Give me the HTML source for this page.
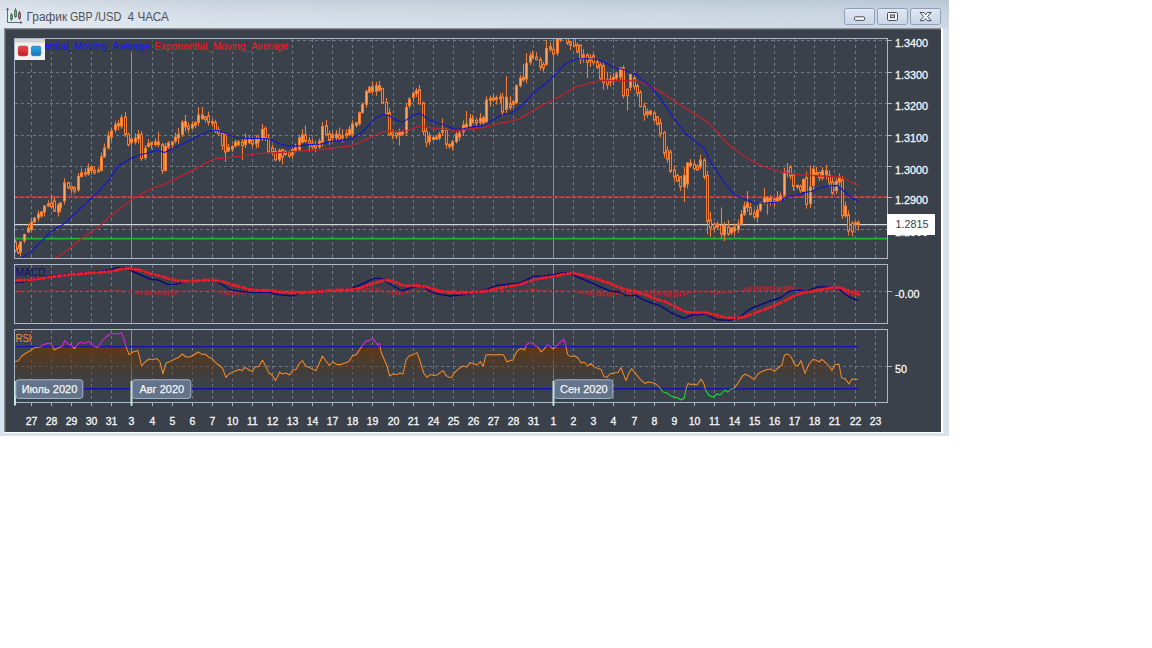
<!DOCTYPE html>
<html lang="ru"><head><meta charset="utf-8"><title>График GBP /USD 4 ЧАСА</title>
<style>
html,body{margin:0;padding:0;background:#fff;}
body{width:1152px;height:648px;position:relative;overflow:hidden;font-family:"Liberation Sans",sans-serif;}
#win{position:absolute;left:0;top:0;width:949px;height:436px;background:#d7e3ef;}
#win .tb{position:absolute;left:0;top:0;width:949px;height:29px;background:linear-gradient(90deg,rgba(255,255,255,0.3) 0%,rgba(255,255,255,0.05) 25%,rgba(110,140,170,0.1) 100%),linear-gradient(180deg,#c2ceda 0%,#d0dae5 40%,#d9e2ec 100%);}
#win .inner{position:absolute;left:4px;top:28px;width:939px;height:405px;background:#fff;}
#win .e1{position:absolute;left:4px;top:28px;width:937px;height:403.5px;background:#8b8f93;}
#win .e2{position:absolute;left:5px;top:29px;width:936px;height:402.5px;background:#555b63;}
#win .panel{position:absolute;left:6px;top:30px;width:935px;height:401.5px;background:#3a414b;}
.btn{position:absolute;top:8px;width:29px;height:14.5px;border:1px solid #8f9fb8;border-radius:2.5px;background:linear-gradient(#dfe8f3,#c9d6e6);box-sizing:content-box;}
</style></head><body>
<div id="win">
<div class="tb"></div><div class="inner"></div><div class="e1"></div><div class="e2"></div><div class="panel"></div>
<div class="btn" style="left:844px"></div><div class="btn" style="left:877px"></div><div class="btn" style="left:910px"></div>
</div>
<svg width="1152" height="648" viewBox="0 0 1152 648" style="position:absolute;left:0;top:0" font-family="'Liberation Sans', sans-serif">
<defs>
<linearGradient id="rg" gradientUnits="userSpaceOnUse" x1="0" y1="345" x2="0" y2="390"><stop offset="0" stop-color="#64370b" stop-opacity="0.95"/><stop offset="0.5" stop-color="#54371c" stop-opacity="0.5"/><stop offset="1" stop-color="#4a3a2c" stop-opacity="0"/></linearGradient>
<clipPath id="cm"><rect x="14.5" y="38.5" width="873.0" height="220.0"/></clipPath>
<clipPath id="cr"><rect x="14.5" y="346.6" width="873.0" height="60"/></clipPath>
<clipPath id="c70"><rect x="14.5" y="329.5" width="873.0" height="17.100000000000023"/></clipPath>
<clipPath id="cmid"><rect x="14.5" y="346.6" width="873.0" height="42.0"/></clipPath>
<clipPath id="c30"><rect x="14.5" y="388.6" width="873.0" height="13.899999999999977"/></clipPath>
</defs>
<g shape-rendering="crispEdges">
<line x1="31.5" y1="38.5" x2="31.5" y2="258.5" stroke="#6e7985" stroke-width="1" stroke-dasharray="3 3"/>
<line x1="51.5" y1="38.5" x2="51.5" y2="258.5" stroke="#6e7985" stroke-width="1" stroke-dasharray="3 3"/>
<line x1="71.5" y1="38.5" x2="71.5" y2="258.5" stroke="#6e7985" stroke-width="1" stroke-dasharray="3 3"/>
<line x1="91.5" y1="38.5" x2="91.5" y2="258.5" stroke="#6e7985" stroke-width="1" stroke-dasharray="3 3"/>
<line x1="111.5" y1="38.5" x2="111.5" y2="258.5" stroke="#6e7985" stroke-width="1" stroke-dasharray="3 3"/>
<line x1="131.5" y1="38.5" x2="131.5" y2="258.5" stroke="#8093a6" stroke-width="1"/>
<line x1="152.5" y1="38.5" x2="152.5" y2="258.5" stroke="#6e7985" stroke-width="1" stroke-dasharray="3 3"/>
<line x1="172.5" y1="38.5" x2="172.5" y2="258.5" stroke="#6e7985" stroke-width="1" stroke-dasharray="3 3"/>
<line x1="192.5" y1="38.5" x2="192.5" y2="258.5" stroke="#6e7985" stroke-width="1" stroke-dasharray="3 3"/>
<line x1="212.5" y1="38.5" x2="212.5" y2="258.5" stroke="#6e7985" stroke-width="1" stroke-dasharray="3 3"/>
<line x1="232.5" y1="38.5" x2="232.5" y2="258.5" stroke="#6e7985" stroke-width="1" stroke-dasharray="3 3"/>
<line x1="252.5" y1="38.5" x2="252.5" y2="258.5" stroke="#6e7985" stroke-width="1" stroke-dasharray="3 3"/>
<line x1="272.5" y1="38.5" x2="272.5" y2="258.5" stroke="#6e7985" stroke-width="1" stroke-dasharray="3 3"/>
<line x1="292.5" y1="38.5" x2="292.5" y2="258.5" stroke="#6e7985" stroke-width="1" stroke-dasharray="3 3"/>
<line x1="312.5" y1="38.5" x2="312.5" y2="258.5" stroke="#6e7985" stroke-width="1" stroke-dasharray="3 3"/>
<line x1="332.5" y1="38.5" x2="332.5" y2="258.5" stroke="#6e7985" stroke-width="1" stroke-dasharray="3 3"/>
<line x1="352.5" y1="38.5" x2="352.5" y2="258.5" stroke="#6e7985" stroke-width="1" stroke-dasharray="3 3"/>
<line x1="372.5" y1="38.5" x2="372.5" y2="258.5" stroke="#6e7985" stroke-width="1" stroke-dasharray="3 3"/>
<line x1="393.5" y1="38.5" x2="393.5" y2="258.5" stroke="#6e7985" stroke-width="1" stroke-dasharray="3 3"/>
<line x1="413.5" y1="38.5" x2="413.5" y2="258.5" stroke="#6e7985" stroke-width="1" stroke-dasharray="3 3"/>
<line x1="433.5" y1="38.5" x2="433.5" y2="258.5" stroke="#6e7985" stroke-width="1" stroke-dasharray="3 3"/>
<line x1="453.5" y1="38.5" x2="453.5" y2="258.5" stroke="#6e7985" stroke-width="1" stroke-dasharray="3 3"/>
<line x1="473.5" y1="38.5" x2="473.5" y2="258.5" stroke="#6e7985" stroke-width="1" stroke-dasharray="3 3"/>
<line x1="493.5" y1="38.5" x2="493.5" y2="258.5" stroke="#6e7985" stroke-width="1" stroke-dasharray="3 3"/>
<line x1="513.5" y1="38.5" x2="513.5" y2="258.5" stroke="#6e7985" stroke-width="1" stroke-dasharray="3 3"/>
<line x1="533.5" y1="38.5" x2="533.5" y2="258.5" stroke="#6e7985" stroke-width="1" stroke-dasharray="3 3"/>
<line x1="553.5" y1="38.5" x2="553.5" y2="258.5" stroke="#8093a6" stroke-width="1"/>
<line x1="573.5" y1="38.5" x2="573.5" y2="258.5" stroke="#6e7985" stroke-width="1" stroke-dasharray="3 3"/>
<line x1="593.5" y1="38.5" x2="593.5" y2="258.5" stroke="#6e7985" stroke-width="1" stroke-dasharray="3 3"/>
<line x1="613.5" y1="38.5" x2="613.5" y2="258.5" stroke="#6e7985" stroke-width="1" stroke-dasharray="3 3"/>
<line x1="634.5" y1="38.5" x2="634.5" y2="258.5" stroke="#6e7985" stroke-width="1" stroke-dasharray="3 3"/>
<line x1="654.5" y1="38.5" x2="654.5" y2="258.5" stroke="#6e7985" stroke-width="1" stroke-dasharray="3 3"/>
<line x1="674.5" y1="38.5" x2="674.5" y2="258.5" stroke="#6e7985" stroke-width="1" stroke-dasharray="3 3"/>
<line x1="694.5" y1="38.5" x2="694.5" y2="258.5" stroke="#6e7985" stroke-width="1" stroke-dasharray="3 3"/>
<line x1="714.5" y1="38.5" x2="714.5" y2="258.5" stroke="#6e7985" stroke-width="1" stroke-dasharray="3 3"/>
<line x1="734.5" y1="38.5" x2="734.5" y2="258.5" stroke="#6e7985" stroke-width="1" stroke-dasharray="3 3"/>
<line x1="754.5" y1="38.5" x2="754.5" y2="258.5" stroke="#6e7985" stroke-width="1" stroke-dasharray="3 3"/>
<line x1="774.5" y1="38.5" x2="774.5" y2="258.5" stroke="#6e7985" stroke-width="1" stroke-dasharray="3 3"/>
<line x1="794.5" y1="38.5" x2="794.5" y2="258.5" stroke="#6e7985" stroke-width="1" stroke-dasharray="3 3"/>
<line x1="814.5" y1="38.5" x2="814.5" y2="258.5" stroke="#6e7985" stroke-width="1" stroke-dasharray="3 3"/>
<line x1="834.5" y1="38.5" x2="834.5" y2="258.5" stroke="#6e7985" stroke-width="1" stroke-dasharray="3 3"/>
<line x1="855.5" y1="38.5" x2="855.5" y2="258.5" stroke="#6e7985" stroke-width="1" stroke-dasharray="3 3"/>
<line x1="875.5" y1="38.5" x2="875.5" y2="258.5" stroke="#6e7985" stroke-width="1" stroke-dasharray="3 3"/>
<line x1="31.5" y1="264.5" x2="31.5" y2="323.5" stroke="#6e7985" stroke-width="1" stroke-dasharray="3 3"/>
<line x1="51.5" y1="264.5" x2="51.5" y2="323.5" stroke="#6e7985" stroke-width="1" stroke-dasharray="3 3"/>
<line x1="71.5" y1="264.5" x2="71.5" y2="323.5" stroke="#6e7985" stroke-width="1" stroke-dasharray="3 3"/>
<line x1="91.5" y1="264.5" x2="91.5" y2="323.5" stroke="#6e7985" stroke-width="1" stroke-dasharray="3 3"/>
<line x1="111.5" y1="264.5" x2="111.5" y2="323.5" stroke="#6e7985" stroke-width="1" stroke-dasharray="3 3"/>
<line x1="131.5" y1="264.5" x2="131.5" y2="323.5" stroke="#8093a6" stroke-width="1"/>
<line x1="152.5" y1="264.5" x2="152.5" y2="323.5" stroke="#6e7985" stroke-width="1" stroke-dasharray="3 3"/>
<line x1="172.5" y1="264.5" x2="172.5" y2="323.5" stroke="#6e7985" stroke-width="1" stroke-dasharray="3 3"/>
<line x1="192.5" y1="264.5" x2="192.5" y2="323.5" stroke="#6e7985" stroke-width="1" stroke-dasharray="3 3"/>
<line x1="212.5" y1="264.5" x2="212.5" y2="323.5" stroke="#6e7985" stroke-width="1" stroke-dasharray="3 3"/>
<line x1="232.5" y1="264.5" x2="232.5" y2="323.5" stroke="#6e7985" stroke-width="1" stroke-dasharray="3 3"/>
<line x1="252.5" y1="264.5" x2="252.5" y2="323.5" stroke="#6e7985" stroke-width="1" stroke-dasharray="3 3"/>
<line x1="272.5" y1="264.5" x2="272.5" y2="323.5" stroke="#6e7985" stroke-width="1" stroke-dasharray="3 3"/>
<line x1="292.5" y1="264.5" x2="292.5" y2="323.5" stroke="#6e7985" stroke-width="1" stroke-dasharray="3 3"/>
<line x1="312.5" y1="264.5" x2="312.5" y2="323.5" stroke="#6e7985" stroke-width="1" stroke-dasharray="3 3"/>
<line x1="332.5" y1="264.5" x2="332.5" y2="323.5" stroke="#6e7985" stroke-width="1" stroke-dasharray="3 3"/>
<line x1="352.5" y1="264.5" x2="352.5" y2="323.5" stroke="#6e7985" stroke-width="1" stroke-dasharray="3 3"/>
<line x1="372.5" y1="264.5" x2="372.5" y2="323.5" stroke="#6e7985" stroke-width="1" stroke-dasharray="3 3"/>
<line x1="393.5" y1="264.5" x2="393.5" y2="323.5" stroke="#6e7985" stroke-width="1" stroke-dasharray="3 3"/>
<line x1="413.5" y1="264.5" x2="413.5" y2="323.5" stroke="#6e7985" stroke-width="1" stroke-dasharray="3 3"/>
<line x1="433.5" y1="264.5" x2="433.5" y2="323.5" stroke="#6e7985" stroke-width="1" stroke-dasharray="3 3"/>
<line x1="453.5" y1="264.5" x2="453.5" y2="323.5" stroke="#6e7985" stroke-width="1" stroke-dasharray="3 3"/>
<line x1="473.5" y1="264.5" x2="473.5" y2="323.5" stroke="#6e7985" stroke-width="1" stroke-dasharray="3 3"/>
<line x1="493.5" y1="264.5" x2="493.5" y2="323.5" stroke="#6e7985" stroke-width="1" stroke-dasharray="3 3"/>
<line x1="513.5" y1="264.5" x2="513.5" y2="323.5" stroke="#6e7985" stroke-width="1" stroke-dasharray="3 3"/>
<line x1="533.5" y1="264.5" x2="533.5" y2="323.5" stroke="#6e7985" stroke-width="1" stroke-dasharray="3 3"/>
<line x1="553.5" y1="264.5" x2="553.5" y2="323.5" stroke="#8093a6" stroke-width="1"/>
<line x1="573.5" y1="264.5" x2="573.5" y2="323.5" stroke="#6e7985" stroke-width="1" stroke-dasharray="3 3"/>
<line x1="593.5" y1="264.5" x2="593.5" y2="323.5" stroke="#6e7985" stroke-width="1" stroke-dasharray="3 3"/>
<line x1="613.5" y1="264.5" x2="613.5" y2="323.5" stroke="#6e7985" stroke-width="1" stroke-dasharray="3 3"/>
<line x1="634.5" y1="264.5" x2="634.5" y2="323.5" stroke="#6e7985" stroke-width="1" stroke-dasharray="3 3"/>
<line x1="654.5" y1="264.5" x2="654.5" y2="323.5" stroke="#6e7985" stroke-width="1" stroke-dasharray="3 3"/>
<line x1="674.5" y1="264.5" x2="674.5" y2="323.5" stroke="#6e7985" stroke-width="1" stroke-dasharray="3 3"/>
<line x1="694.5" y1="264.5" x2="694.5" y2="323.5" stroke="#6e7985" stroke-width="1" stroke-dasharray="3 3"/>
<line x1="714.5" y1="264.5" x2="714.5" y2="323.5" stroke="#6e7985" stroke-width="1" stroke-dasharray="3 3"/>
<line x1="734.5" y1="264.5" x2="734.5" y2="323.5" stroke="#6e7985" stroke-width="1" stroke-dasharray="3 3"/>
<line x1="754.5" y1="264.5" x2="754.5" y2="323.5" stroke="#6e7985" stroke-width="1" stroke-dasharray="3 3"/>
<line x1="774.5" y1="264.5" x2="774.5" y2="323.5" stroke="#6e7985" stroke-width="1" stroke-dasharray="3 3"/>
<line x1="794.5" y1="264.5" x2="794.5" y2="323.5" stroke="#6e7985" stroke-width="1" stroke-dasharray="3 3"/>
<line x1="814.5" y1="264.5" x2="814.5" y2="323.5" stroke="#6e7985" stroke-width="1" stroke-dasharray="3 3"/>
<line x1="834.5" y1="264.5" x2="834.5" y2="323.5" stroke="#6e7985" stroke-width="1" stroke-dasharray="3 3"/>
<line x1="855.5" y1="264.5" x2="855.5" y2="323.5" stroke="#6e7985" stroke-width="1" stroke-dasharray="3 3"/>
<line x1="875.5" y1="264.5" x2="875.5" y2="323.5" stroke="#6e7985" stroke-width="1" stroke-dasharray="3 3"/>
<line x1="31.5" y1="329.5" x2="31.5" y2="402.5" stroke="#6e7985" stroke-width="1" stroke-dasharray="3 3"/>
<line x1="51.5" y1="329.5" x2="51.5" y2="402.5" stroke="#6e7985" stroke-width="1" stroke-dasharray="3 3"/>
<line x1="71.5" y1="329.5" x2="71.5" y2="402.5" stroke="#6e7985" stroke-width="1" stroke-dasharray="3 3"/>
<line x1="91.5" y1="329.5" x2="91.5" y2="402.5" stroke="#6e7985" stroke-width="1" stroke-dasharray="3 3"/>
<line x1="111.5" y1="329.5" x2="111.5" y2="402.5" stroke="#6e7985" stroke-width="1" stroke-dasharray="3 3"/>
<line x1="131.5" y1="329.5" x2="131.5" y2="402.5" stroke="#8093a6" stroke-width="1"/>
<line x1="152.5" y1="329.5" x2="152.5" y2="402.5" stroke="#6e7985" stroke-width="1" stroke-dasharray="3 3"/>
<line x1="172.5" y1="329.5" x2="172.5" y2="402.5" stroke="#6e7985" stroke-width="1" stroke-dasharray="3 3"/>
<line x1="192.5" y1="329.5" x2="192.5" y2="402.5" stroke="#6e7985" stroke-width="1" stroke-dasharray="3 3"/>
<line x1="212.5" y1="329.5" x2="212.5" y2="402.5" stroke="#6e7985" stroke-width="1" stroke-dasharray="3 3"/>
<line x1="232.5" y1="329.5" x2="232.5" y2="402.5" stroke="#6e7985" stroke-width="1" stroke-dasharray="3 3"/>
<line x1="252.5" y1="329.5" x2="252.5" y2="402.5" stroke="#6e7985" stroke-width="1" stroke-dasharray="3 3"/>
<line x1="272.5" y1="329.5" x2="272.5" y2="402.5" stroke="#6e7985" stroke-width="1" stroke-dasharray="3 3"/>
<line x1="292.5" y1="329.5" x2="292.5" y2="402.5" stroke="#6e7985" stroke-width="1" stroke-dasharray="3 3"/>
<line x1="312.5" y1="329.5" x2="312.5" y2="402.5" stroke="#6e7985" stroke-width="1" stroke-dasharray="3 3"/>
<line x1="332.5" y1="329.5" x2="332.5" y2="402.5" stroke="#6e7985" stroke-width="1" stroke-dasharray="3 3"/>
<line x1="352.5" y1="329.5" x2="352.5" y2="402.5" stroke="#6e7985" stroke-width="1" stroke-dasharray="3 3"/>
<line x1="372.5" y1="329.5" x2="372.5" y2="402.5" stroke="#6e7985" stroke-width="1" stroke-dasharray="3 3"/>
<line x1="393.5" y1="329.5" x2="393.5" y2="402.5" stroke="#6e7985" stroke-width="1" stroke-dasharray="3 3"/>
<line x1="413.5" y1="329.5" x2="413.5" y2="402.5" stroke="#6e7985" stroke-width="1" stroke-dasharray="3 3"/>
<line x1="433.5" y1="329.5" x2="433.5" y2="402.5" stroke="#6e7985" stroke-width="1" stroke-dasharray="3 3"/>
<line x1="453.5" y1="329.5" x2="453.5" y2="402.5" stroke="#6e7985" stroke-width="1" stroke-dasharray="3 3"/>
<line x1="473.5" y1="329.5" x2="473.5" y2="402.5" stroke="#6e7985" stroke-width="1" stroke-dasharray="3 3"/>
<line x1="493.5" y1="329.5" x2="493.5" y2="402.5" stroke="#6e7985" stroke-width="1" stroke-dasharray="3 3"/>
<line x1="513.5" y1="329.5" x2="513.5" y2="402.5" stroke="#6e7985" stroke-width="1" stroke-dasharray="3 3"/>
<line x1="533.5" y1="329.5" x2="533.5" y2="402.5" stroke="#6e7985" stroke-width="1" stroke-dasharray="3 3"/>
<line x1="553.5" y1="329.5" x2="553.5" y2="402.5" stroke="#8093a6" stroke-width="1"/>
<line x1="573.5" y1="329.5" x2="573.5" y2="402.5" stroke="#6e7985" stroke-width="1" stroke-dasharray="3 3"/>
<line x1="593.5" y1="329.5" x2="593.5" y2="402.5" stroke="#6e7985" stroke-width="1" stroke-dasharray="3 3"/>
<line x1="613.5" y1="329.5" x2="613.5" y2="402.5" stroke="#6e7985" stroke-width="1" stroke-dasharray="3 3"/>
<line x1="634.5" y1="329.5" x2="634.5" y2="402.5" stroke="#6e7985" stroke-width="1" stroke-dasharray="3 3"/>
<line x1="654.5" y1="329.5" x2="654.5" y2="402.5" stroke="#6e7985" stroke-width="1" stroke-dasharray="3 3"/>
<line x1="674.5" y1="329.5" x2="674.5" y2="402.5" stroke="#6e7985" stroke-width="1" stroke-dasharray="3 3"/>
<line x1="694.5" y1="329.5" x2="694.5" y2="402.5" stroke="#6e7985" stroke-width="1" stroke-dasharray="3 3"/>
<line x1="714.5" y1="329.5" x2="714.5" y2="402.5" stroke="#6e7985" stroke-width="1" stroke-dasharray="3 3"/>
<line x1="734.5" y1="329.5" x2="734.5" y2="402.5" stroke="#6e7985" stroke-width="1" stroke-dasharray="3 3"/>
<line x1="754.5" y1="329.5" x2="754.5" y2="402.5" stroke="#6e7985" stroke-width="1" stroke-dasharray="3 3"/>
<line x1="774.5" y1="329.5" x2="774.5" y2="402.5" stroke="#6e7985" stroke-width="1" stroke-dasharray="3 3"/>
<line x1="794.5" y1="329.5" x2="794.5" y2="402.5" stroke="#6e7985" stroke-width="1" stroke-dasharray="3 3"/>
<line x1="814.5" y1="329.5" x2="814.5" y2="402.5" stroke="#6e7985" stroke-width="1" stroke-dasharray="3 3"/>
<line x1="834.5" y1="329.5" x2="834.5" y2="402.5" stroke="#6e7985" stroke-width="1" stroke-dasharray="3 3"/>
<line x1="855.5" y1="329.5" x2="855.5" y2="402.5" stroke="#6e7985" stroke-width="1" stroke-dasharray="3 3"/>
<line x1="875.5" y1="329.5" x2="875.5" y2="402.5" stroke="#6e7985" stroke-width="1" stroke-dasharray="3 3"/>
<line x1="14.5" y1="40.2" x2="887.5" y2="40.2" stroke="#6e7985" stroke-width="1" stroke-dasharray="3 3"/>
<line x1="14.5" y1="72.1" x2="887.5" y2="72.1" stroke="#6e7985" stroke-width="1" stroke-dasharray="3 3"/>
<line x1="14.5" y1="103.3" x2="887.5" y2="103.3" stroke="#6e7985" stroke-width="1" stroke-dasharray="3 3"/>
<line x1="14.5" y1="135.2" x2="887.5" y2="135.2" stroke="#6e7985" stroke-width="1" stroke-dasharray="3 3"/>
<line x1="14.5" y1="166.6" x2="887.5" y2="166.6" stroke="#6e7985" stroke-width="1" stroke-dasharray="3 3"/>
<line x1="14.5" y1="197.2" x2="887.5" y2="197.2" stroke="#6e7985" stroke-width="1" stroke-dasharray="3 3"/>
<line x1="14.5" y1="229" x2="887.5" y2="229" stroke="#6e7985" stroke-width="1" stroke-dasharray="3 3"/>
<line x1="14.5" y1="291" x2="887.5" y2="291" stroke="#6e7985" stroke-width="1" stroke-dasharray="3 3"/>
<line x1="14.5" y1="366.5" x2="887.5" y2="366.5" stroke="#6e7985" stroke-width="1" stroke-dasharray="3 3"/>
</g>
<polygon points="15,402.5 15,361.4 18,361 22,356 26,353 30,351 35,347.4 40,347 43,345 47,343.4 51,343.4 54.4,350 59,347.4 62,346.6 65,340.6 68,344 71,345 74.4,348.6 78,344 81,342 85,343.4 89,341.4 93,345.4 96.4,347.4 99,346 102,341 106,337 110,334 114,333.4 118,334 121.4,332.6 124,339 126,346.6 129,354.6 133,352 138,350.6 141.6,366 145,362 149,359 153,359.4 157,358.6 160,362 163,374 166,363 170,361.4 175,359 179,357 182.4,354 186,357 190,357 194,355 198,352 202,354.6 205,354 209,357.4 212,358.6 216,363 220,366 222.4,368 226,377.4 229,374 234,371.4 239,369.4 242,370.6 245,367.4 249,370 252.4,371.4 255,367 259,366.6 262.4,360 266,367 269,373 272,375 275.6,380.6 279.6,372 282.4,374 286,373 289.6,375 293,370 296,369.4 299,364 302.4,360.6 305.6,366 309,367.4 313,369.4 316,370.6 319,364 322.4,356 326,361 329.6,365.4 333,362 337,364.6 341,364.6 345,363 349,361.4 352.4,356 356.4,354.6 360,349 363.6,344 366.4,340.6 369,340.6 372.4,338.6 375,341 377.6,345 379.6,343.4 381,352 384,359 387,366 389.6,376 393,374 397,374.6 400,373 403,374 406,360 409,356 413,354.6 417,352.6 420,361 423.6,373 427,377.4 430,374.6 434,375.4 437,375 440,372.6 443,370.6 446,375.4 449,377.4 452,377 454,373 459,368.6 463,366 467,367 470,362.6 474,364 477,365 480.4,361.4 483,366.6 486,355 490,354.6 494,355 499,354.6 503.6,355 507,362 510,360.6 513,360 516,353 519,349.4 522,348.6 524.4,350 527,344 530,342.6 533,343.4 535,346 538,347 541,352 544,349.4 547.6,344.6 550,346 553,349 556,346.6 560,342.6 563.6,339 565.6,345 567.6,354.6 571,356.6 575,356 578,358 581,363 584,362 588,366 591,363.4 594,366.6 598,368.6 601,369.4 604,376.6 607,377.4 610,374 614,373 618,372.6 621,367.4 623,373 626,380.6 629,373 631.6,368.6 635,372.6 638,376.6 642,381 645,383.4 648,382 652,382.6 656,384 660,388 663,392 667,393 670,395.4 674,397 678,398 681,400 684.4,398 686,389 688,383.4 691,384.6 694,384 697,385 701,379 704,384 706,391 709,395.4 713,397 717,394 720,395 723,392 725,390 728,392 731,389 734,388.6 738,383 742,376.6 745,374 749,376 754,379.4 758,374 762,371.4 767,369.4 771,369 774.4,371.4 778,368 782,365 784.4,355 788,354 791,357 795,365 798,366 801,360.6 805,373.4 809,364 813,359.4 816,360 819,362 822,359.4 826,363 829,366 832,370.6 835,364.6 839,364.2 841.6,378 845,378.6 849,384 852,379 858,379.4 858,402.5" fill="url(#rg)" clip-path="url(#cr)"/>
<g clip-path="url(#cm)">
<line x1="14.5" y1="197" x2="887.5" y2="197" stroke="#a62a38" stroke-width="2"/>
<line x1="14.5" y1="197.2" x2="887.5" y2="197.2" stroke="#cc7078" stroke-width="1" stroke-dasharray="3 3"/>
<line x1="14.5" y1="224.6" x2="887.5" y2="224.6" stroke="#d0d2d5" stroke-width="1.3"/>
<line x1="14.5" y1="238.7" x2="887.5" y2="238.7" stroke="#1cb62e" stroke-width="1.8"/>
<path d="M15.5 239.4V252.4M18.5 244.6V254M20.5 241V256.4M24.5 233.5V243.3M28.5 223.6V233M31.5 217.6V231.4M34.5 217V223M38.5 210.6V221.4M41.5 211V217.8M44.5 205V216.4M48.5 200.3V207M51.5 195V208.6M54.5 196.6V212M58.5 203.2V216.4M60.5 202V212.4M64.5 178.3V204.4M68.5 181.7V189.4M71.5 185.4V193.4M74.5 185.8V193.6M78.5 173.1V191.8M81.5 168.4V177.5M85.5 168.2V176.8M88.5 163.6V175.8M91.5 165.7V174.8M94.5 166V174.6M98.5 167.6V172.8M101.5 152.4V171.4M104.5 143.6V157.8M108.5 131.4V149.8M111.5 127.5V141.4M115.5 121.3V132.2M118.5 120.1V130.4M121.5 114.4V128.7M125.5 112V137M128.5 132.6V146.4M131.5 137.2V143.8M135.5 133.6V144.5M138.5 129.8V143.4M141.5 131V161.1M145.5 144.9V160.2M148.5 139.3V147.5M151.5 141.8V149M155.5 138.5V146.4M158.5 131.7V147.2M162.5 142.8V174M165.5 143.1V171.6M168.5 141V149M172.5 140.9V149M175.5 132.8V143.6M178.5 128V143.7M182.5 119.8V137M185.5 115V131.4M188.5 122.6V133.4M192.5 120.9V129M195.5 121.4V127.8M198.5 107V125.8M202.5 107V119.7M205.5 115.9V122.2M208.5 111.6V125.8M212.5 118.9V126.7M215.5 119.8V132.7M218.5 126.4V136.1M222.5 131.7V149.9M225.5 133.4V162M228.5 144V152M232.5 144.7V151.9M235.5 140V147.4M238.5 140.1V146.4M242.5 138.5V160M245.5 133.5V148M249.5 135.6V143.8M252.5 138.6V147.4M256.5 136V148.4M258.5 134.8V147.8M262.5 124V141.1M265.5 126.5V141M268.5 134.1V154.1M272.5 144.4V155M275.5 148.1V161.6M279.5 148.8V161.7M282.5 148.6V164.4M285.5 149.7V156.1M289.5 150.6V157.8M292.5 148.6V158.4M295.5 143.4V152.4M299.5 135V152.2M302.5 129.3V143.2M305.5 125.6V143.1M309.5 137V151.5M312.5 138.6V149.5M315.5 140.6V152.2M319.5 138.7V148.7M322.5 122.1V146.6M326.5 120V135.8M329.5 130.5V144.8M332.5 131.4V141M336.5 130V141M339.5 127.4V140.4M342.5 129.3V142.2M346.5 129.3V138.5M349.5 125.9V135.8M352.5 120.3V137.3M356.5 121.9V127.4M359.5 111.6V125.5M362.5 102.4V113.6M366.5 89.5V107.7M369.5 85.8V93.2M372.5 82V93.9M376.5 82V95.7M379.5 81V91.4M382.5 87.5V104.3M386.5 98V115.3M389.5 108.2V135.8M392.5 129.8V139.6M396.5 132.3V139M399.5 128.7V145.4M402.5 130.5V136.1M406.5 103V135.8M409.5 97.2V108.2M413.5 90.9V101.6M416.5 88.1V96.9M419.5 85V104.7M423.5 101.8V134.9M426.5 128.1V147M429.5 132.6V145.1M433.5 134.9V140.5M436.5 135.2V140M439.5 131.7V140.6M442.5 118.5V135.8M446.5 127.8V148.8M449.5 143.4V149M452.5 139.9V150.7M456.5 131.7V143.5M459.5 130.6V140.7M463.5 120.4V135.9M466.5 111V128.8M470.5 114.1V129.5M472.5 114.8V123.2M476.5 117.8V127.4M480.5 113V124.8M483.5 115.8V125.6M486.5 96.3V124M490.5 95.4V106.5M493.5 93.5V101.9M496.5 95.4V104.6M500.5 93.5V103.7M502.5 92.8V116.4M506.5 76V113.7M510.5 96.3V110M513.5 99.8V108.7M516.5 84V104.3M520.5 74.8V87.4M523.5 64V81.8M526.5 53V83.4M530.5 52.6V65M532.5 50.4V58.8M536.5 52.2V60.6M540.5 57V70.4M543.5 61.7V71.7M546.5 40V66.1M550.5 42.3V52M553.5 46V56.6M557.5 33V55.6M560.5 30V42M563.5 28V38M567.5 30V45M570.5 40.8V50M574.5 33V47M577.5 43.1V53.5M580.5 44.3V64M583.5 49.2V62.6M587.5 53.2V78M590.5 54V67M593.5 52.7V64.4M597.5 58.3V69.2M600.5 62.2V80.5M603.5 62.3V90M607.5 71.7V89.3M610.5 74.4V86.5M613.5 72.8V85.4M616.5 71.7V80M620.5 67V80.4M623.5 65.2V98.3M627.5 88.3V110.6M630.5 72.5V90.8M634.5 76.2V89.9M637.5 83.8V96.4M640.5 89.9V107.5M644.5 102.6V120.7M647.5 108.2V117.8M650.5 110V115.8M654.5 111.2V121.8M657.5 116V125.8M660.5 118.4V137.4M664.5 130.7V157.7M667.5 146.1V162.4M670.5 149.4V173.2M674.5 165.6V181.4M677.5 173.7V182M680.5 176V191M684.5 167V202M687.5 162V188.4M690.5 159V167.8M694.5 161V170.4M697.5 164.2V171M700.5 154.7V169.6M704.5 158.2V179.6M707.5 171.1V234M710.5 211.7V236.7M714.5 222.2V232.4M717.5 221.4V229.6M721.5 207.5V238.4M724.5 222.1V241M728.5 220V235.8M731.5 227V235.1M734.5 223.6V235.4M738.5 219.6V233.1M741.5 210V225.8M744.5 201.6V216.2M747.5 191V211.9M750.5 203.1V215.4M754.5 209.6V218.8M757.5 205.6V222.8M760.5 202V211.8M764.5 188V204.8M767.5 196V214.4M770.5 195V205.4M774.5 197.8V206.4M777.5 191V203M780.5 192.4V202.6M784.5 168.1V199.4M787.5 163V177.7M790.5 164.7V179.4M793.5 174V190.7M797.5 184.4V189M800.5 184.5V193.2M803.5 178.4V192.5M806.5 171.6V208.8M810.5 165.6V208M813.5 165.6V189.8M816.5 166.4V175.2M819.5 171.5V181.1M822.5 167.3V180.3M826.5 165V179.4M829.5 170.6V187.2M832.5 177.6V195M836.5 178.4V194M839.5 173.3V186.4M842.5 176V219.1M845.5 201.6V217.5M848.5 210.4V235.6M852.5 220.9V236.4M855.5 220.9V228.7M858.5 220V230.4" stroke="#ee7d35" stroke-width="1.1" fill="none"/>
<g fill="#ffa65e" stroke="#f27c30" stroke-width="1"><rect x="19.5" y="242" width="2" height="10"/><rect x="23.5" y="234.5" width="2" height="6.2"/><rect x="27.5" y="228" width="2" height="4"/><rect x="30.5" y="222" width="2" height="7.6"/><rect x="33.5" y="218" width="2" height="4"/><rect x="37.5" y="214" width="2" height="4"/><rect x="40.5" y="212" width="2" height="4"/><rect x="43.5" y="206" width="2" height="6"/><rect x="47.5" y="203.7" width="2" height="2.3"/><rect x="57.5" y="205" width="2" height="7"/><rect x="59.5" y="203" width="2" height="5"/><rect x="63.5" y="182.7" width="2" height="18.3"/><rect x="77.5" y="176.5" width="2" height="13.5"/><rect x="80.5" y="172.8" width="2" height="3.7"/><rect x="84.5" y="172.6" width="2" height="1.6"/><rect x="87.5" y="168" width="2" height="6"/><rect x="90.5" y="166.7" width="2" height="3.7"/><rect x="97.5" y="170.2" width="2" height="1.6"/><rect x="100.5" y="156.8" width="2" height="13.6"/><rect x="103.5" y="148" width="2" height="8.8"/><rect x="107.5" y="135.8" width="2" height="12.2"/><rect x="110.5" y="130.9" width="2" height="6.1"/><rect x="114.5" y="124.7" width="2" height="4.9"/><rect x="117.5" y="123.5" width="2" height="2.5"/><rect x="120.5" y="117.8" width="2" height="8.3"/><rect x="130.5" y="139" width="2" height="3.8"/><rect x="134.5" y="138" width="2" height="3.9"/><rect x="137.5" y="134.4" width="2" height="4.6"/><rect x="144.5" y="148.3" width="2" height="9.3"/><rect x="147.5" y="143.7" width="2" height="2.8"/><rect x="150.5" y="142.8" width="2" height="1.8"/><rect x="154.5" y="141.9" width="2" height="2.7"/><rect x="157.5" y="141.9" width="2" height="2.7"/><rect x="164.5" y="146.5" width="2" height="24.1"/><rect x="167.5" y="143" width="2" height="4"/><rect x="171.5" y="141.9" width="2" height="2.7"/><rect x="174.5" y="137.2" width="2" height="3.8"/><rect x="177.5" y="134.4" width="2" height="3.6"/><rect x="181.5" y="122.4" width="2" height="12"/><rect x="184.5" y="121.5" width="2" height="5.5"/><rect x="191.5" y="124.3" width="2" height="3.7"/><rect x="194.5" y="122.4" width="2" height="2.8"/><rect x="197.5" y="115" width="2" height="7.4"/><rect x="201.5" y="115" width="2" height="3.7"/><rect x="227.5" y="147.4" width="2" height="3.6"/><rect x="231.5" y="146.5" width="2" height="2.8"/><rect x="234.5" y="142" width="2" height="4"/><rect x="237.5" y="141.9" width="2" height="2.7"/><rect x="244.5" y="140" width="2" height="4.6"/><rect x="248.5" y="139" width="2" height="3.8"/><rect x="255.5" y="139.4" width="2" height="4.6"/><rect x="257.5" y="138.5" width="2" height="2.8"/><rect x="261.5" y="129.3" width="2" height="9.2"/><rect x="278.5" y="150.6" width="2" height="9.2"/><rect x="284.5" y="151.5" width="2" height="2.8"/><rect x="291.5" y="149.6" width="2" height="5.4"/><rect x="294.5" y="147.8" width="2" height="2.8"/><rect x="298.5" y="137.6" width="2" height="12"/><rect x="301.5" y="134.8" width="2" height="7.4"/><rect x="318.5" y="141.3" width="2" height="5.6"/><rect x="321.5" y="126.5" width="2" height="15.7"/><rect x="331.5" y="134.8" width="2" height="2.8"/><rect x="335.5" y="133.9" width="2" height="3.7"/><rect x="341.5" y="135.7" width="2" height="1.9"/><rect x="345.5" y="133.9" width="2" height="1.8"/><rect x="348.5" y="129.3" width="2" height="5.5"/><rect x="351.5" y="123.7" width="2" height="10.2"/><rect x="355.5" y="122.8" width="2" height="2.8"/><rect x="358.5" y="112.6" width="2" height="11.1"/><rect x="361.5" y="104.3" width="2" height="8.3"/><rect x="365.5" y="91.3" width="2" height="13"/><rect x="368.5" y="87.6" width="2" height="4.6"/><rect x="371.5" y="86.7" width="2" height="4.6"/><rect x="375.5" y="85.7" width="2" height="5.6"/><rect x="378.5" y="85.7" width="2" height="4.7"/><rect x="398.5" y="132.4" width="2" height="2.8"/><rect x="401.5" y="131.5" width="2" height="2.8"/><rect x="405.5" y="107.4" width="2" height="25"/><rect x="408.5" y="99" width="2" height="6.6"/><rect x="412.5" y="93.5" width="2" height="3.7"/><rect x="415.5" y="90.7" width="2" height="2.8"/><rect x="428.5" y="136" width="2" height="5.7"/><rect x="432.5" y="137.5" width="2" height="2"/><rect x="435.5" y="137" width="2" height="2"/><rect x="438.5" y="134.3" width="2" height="3.7"/><rect x="441.5" y="128.7" width="2" height="3.7"/><rect x="451.5" y="141.7" width="2" height="4.6"/><rect x="455.5" y="134.3" width="2" height="7.4"/><rect x="458.5" y="133" width="2" height="4"/><rect x="462.5" y="125" width="2" height="6.5"/><rect x="465.5" y="124" width="2" height="3.8"/><rect x="469.5" y="118.5" width="2" height="8.4"/><rect x="471.5" y="119.4" width="2" height="2.8"/><rect x="479.5" y="118.5" width="2" height="3.7"/><rect x="482.5" y="117.6" width="2" height="5.4"/><rect x="485.5" y="100" width="2" height="22.2"/><rect x="489.5" y="98.5" width="2" height="1.9"/><rect x="492.5" y="98" width="2" height="2"/><rect x="495.5" y="97.8" width="2" height="1.8"/><rect x="499.5" y="97" width="2" height="2"/><rect x="505.5" y="97.2" width="2" height="12.1"/><rect x="512.5" y="101.6" width="2" height="2.7"/><rect x="515.5" y="85.8" width="2" height="16.7"/><rect x="519.5" y="78.2" width="2" height="7.4"/><rect x="522.5" y="77.2" width="2" height="2.8"/><rect x="525.5" y="63.3" width="2" height="15.7"/><rect x="529.5" y="56" width="2" height="6.4"/><rect x="531.5" y="55" width="2" height="2.8"/><rect x="545.5" y="48.5" width="2" height="15.8"/><rect x="549.5" y="46.7" width="2" height="2.7"/><rect x="556.5" y="37" width="2" height="16"/><rect x="559.5" y="34" width="2" height="6"/><rect x="562.5" y="32" width="2" height="4"/><rect x="582.5" y="54.8" width="2" height="2.6"/><rect x="589.5" y="57.4" width="2" height="3.6"/><rect x="609.5" y="79" width="2" height="2.9"/><rect x="612.5" y="77.2" width="2" height="3.8"/><rect x="615.5" y="74" width="2" height="4"/><rect x="619.5" y="68" width="2" height="9"/><rect x="629.5" y="73.5" width="2" height="13.9"/><rect x="649.5" y="111" width="2" height="3"/><rect x="683.5" y="175.5" width="2" height="11.2"/><rect x="686.5" y="163" width="2" height="21"/><rect x="689.5" y="163" width="2" height="3"/><rect x="699.5" y="160" width="2" height="7"/><rect x="716.5" y="224" width="2" height="3"/><rect x="723.5" y="225.5" width="2" height="9.5"/><rect x="730.5" y="228" width="2" height="4.5"/><rect x="733.5" y="227" width="2" height="4"/><rect x="737.5" y="224" width="2" height="5.7"/><rect x="740.5" y="214.4" width="2" height="9.6"/><rect x="743.5" y="206" width="2" height="8.4"/><rect x="746.5" y="203" width="2" height="4.5"/><rect x="756.5" y="210" width="2" height="7"/><rect x="759.5" y="203" width="2" height="7"/><rect x="763.5" y="197.8" width="2" height="5.2"/><rect x="766.5" y="197.8" width="2" height="4.2"/><rect x="769.5" y="198.4" width="2" height="2.6"/><rect x="776.5" y="198" width="2" height="4"/><rect x="779.5" y="195.8" width="2" height="4.2"/><rect x="783.5" y="172.5" width="2" height="22.5"/><rect x="786.5" y="171.6" width="2" height="1.7"/><rect x="802.5" y="179.4" width="2" height="12.1"/><rect x="809.5" y="187" width="2" height="16.6"/><rect x="812.5" y="169" width="2" height="16.4"/><rect x="815.5" y="172.5" width="2" height="1.7"/><rect x="821.5" y="170.7" width="2" height="7"/><rect x="825.5" y="170.7" width="2" height="4.3"/><rect x="835.5" y="181" width="2" height="9.6"/><rect x="838.5" y="177.7" width="2" height="4.3"/><rect x="844.5" y="206" width="2" height="9.7"/><rect x="854.5" y="222.6" width="2" height="1.7"/><rect x="857.5" y="222.5" width="2" height="1.6"/></g>
<g fill="#6a3414" stroke="#f27c30" stroke-width="1"><rect x="14.5" y="242" width="2" height="8.6"/><rect x="17.5" y="248" width="2" height="5"/><rect x="50.5" y="203" width="2" height="4"/><rect x="53.5" y="201" width="2" height="10"/><rect x="67.5" y="182.7" width="2" height="4.9"/><rect x="70.5" y="186.4" width="2" height="2.6"/><rect x="73.5" y="187.6" width="2" height="3.4"/><rect x="93.5" y="170.4" width="2" height="2.4"/><rect x="124.5" y="116.9" width="2" height="17.5"/><rect x="127.5" y="134.4" width="2" height="10.2"/><rect x="140.5" y="134.4" width="2" height="24.1"/><rect x="161.5" y="144.6" width="2" height="26"/><rect x="187.5" y="126" width="2" height="3"/><rect x="204.5" y="116.9" width="2" height="2.7"/><rect x="207.5" y="116" width="2" height="6.4"/><rect x="211.5" y="121.5" width="2" height="1.8"/><rect x="214.5" y="122.4" width="2" height="9.3"/><rect x="217.5" y="129.8" width="2" height="3.7"/><rect x="221.5" y="133.5" width="2" height="12"/><rect x="224.5" y="134.4" width="2" height="17.6"/><rect x="241.5" y="141.9" width="2" height="3.6"/><rect x="251.5" y="140.4" width="2" height="3.6"/><rect x="264.5" y="128.3" width="2" height="9.3"/><rect x="267.5" y="138.5" width="2" height="13"/><rect x="271.5" y="147.8" width="2" height="4.6"/><rect x="274.5" y="151.5" width="2" height="8.3"/><rect x="281.5" y="149.6" width="2" height="7.4"/><rect x="288.5" y="152.4" width="2" height="3.6"/><rect x="304.5" y="134.8" width="2" height="6.5"/><rect x="308.5" y="140.4" width="2" height="3.6"/><rect x="311.5" y="143" width="2" height="3.9"/><rect x="314.5" y="145" width="2" height="2.8"/><rect x="325.5" y="125.6" width="2" height="9.2"/><rect x="328.5" y="133.9" width="2" height="6.5"/><rect x="338.5" y="134.8" width="2" height="3.7"/><rect x="381.5" y="88.5" width="2" height="14.8"/><rect x="385.5" y="102.4" width="2" height="11.1"/><rect x="388.5" y="112.6" width="2" height="22.2"/><rect x="391.5" y="132.4" width="2" height="2.8"/><rect x="395.5" y="133.3" width="2" height="2.7"/><rect x="418.5" y="89.8" width="2" height="13.9"/><rect x="422.5" y="102.8" width="2" height="28.7"/><rect x="425.5" y="131.5" width="2" height="11.1"/><rect x="445.5" y="129.6" width="2" height="14.8"/><rect x="448.5" y="144.4" width="2" height="1.9"/><rect x="475.5" y="120.4" width="2" height="2.6"/><rect x="501.5" y="97.2" width="2" height="14.8"/><rect x="509.5" y="103.7" width="2" height="3.7"/><rect x="535.5" y="56.9" width="2" height="2.7"/><rect x="539.5" y="59.6" width="2" height="7.4"/><rect x="542.5" y="64.3" width="2" height="3.7"/><rect x="552.5" y="49.4" width="2" height="4.6"/><rect x="566.5" y="35" width="2" height="8"/><rect x="569.5" y="41.8" width="2" height="3.5"/><rect x="573.5" y="37" width="2" height="8.7"/><rect x="576.5" y="44.9" width="2" height="6.9"/><rect x="579.5" y="45.3" width="2" height="13.9"/><rect x="586.5" y="55" width="2" height="7.4"/><rect x="592.5" y="55.7" width="2" height="6.9"/><rect x="596.5" y="61.8" width="2" height="5.6"/><rect x="599.5" y="64.8" width="2" height="13.9"/><rect x="602.5" y="65.7" width="2" height="16.9"/><rect x="606.5" y="80" width="2" height="4.6"/><rect x="622.5" y="68" width="2" height="27.7"/><rect x="626.5" y="89.3" width="2" height="6.4"/><rect x="633.5" y="78" width="2" height="8.5"/><rect x="636.5" y="85.6" width="2" height="7.4"/><rect x="639.5" y="92.5" width="2" height="14"/><rect x="643.5" y="106" width="2" height="8.7"/><rect x="646.5" y="111.6" width="2" height="2.8"/><rect x="653.5" y="113" width="2" height="7"/><rect x="656.5" y="117" width="2" height="7"/><rect x="659.5" y="122.8" width="2" height="11.2"/><rect x="663.5" y="132.5" width="2" height="20.8"/><rect x="666.5" y="150.5" width="2" height="8.5"/><rect x="669.5" y="152" width="2" height="19.4"/><rect x="673.5" y="170" width="2" height="7"/><rect x="676.5" y="175.5" width="2" height="5.5"/><rect x="679.5" y="177" width="2" height="9.7"/><rect x="693.5" y="164.4" width="2" height="4.2"/><rect x="696.5" y="166" width="2" height="4"/><rect x="703.5" y="160" width="2" height="17"/><rect x="706.5" y="175.5" width="2" height="45.9"/><rect x="709.5" y="220" width="2" height="8"/><rect x="713.5" y="224" width="2" height="4"/><rect x="720.5" y="225.5" width="2" height="8.5"/><rect x="727.5" y="227" width="2" height="7"/><rect x="749.5" y="207.5" width="2" height="6.9"/><rect x="753.5" y="213" width="2" height="4"/><rect x="773.5" y="198.8" width="2" height="3.2"/><rect x="789.5" y="167.3" width="2" height="8.7"/><rect x="792.5" y="175" width="2" height="11.3"/><rect x="796.5" y="185.4" width="2" height="1.8"/><rect x="799.5" y="186.3" width="2" height="4.3"/><rect x="805.5" y="177.7" width="2" height="26.8"/><rect x="818.5" y="172.5" width="2" height="5.2"/><rect x="828.5" y="175" width="2" height="7.8"/><rect x="831.5" y="182" width="2" height="11.2"/><rect x="841.5" y="180.3" width="2" height="35.4"/><rect x="847.5" y="214.8" width="2" height="16.2"/><rect x="851.5" y="223.5" width="2" height="8.5"/></g>
<polyline points="54.5,258.5 62.5,254 71.7,246.4 81,238.9 90.2,232.5 99.5,226.4 108.8,217.5 113.7,213.5 120,208.5 131,200 142,193.7 153,188 164.4,184.4 175.6,178.9 186.7,173.3 197.8,167.8 208.9,161.3 216.3,158.5 225.6,158 238.5,156.3 249.6,154.8 261,153.3 272,153 283,152.4 294.4,151.5 305.6,150.6 316.7,150 327.8,148.7 338.9,147.4 350,145.9 361,142.2 372,136.7 383,132 389.3,130.9 398.5,131.5 407.8,130.6 417,126.9 426.3,126.9 435.6,128.7 444.8,129.3 454,130 463.3,130 472.6,128.7 481.9,127.8 491,125.9 500.4,123 509.6,121.3 519.3,118.9 528.5,113.3 537.8,107.8 547,103 556.3,98.5 565.6,93 574.8,87.4 584,84.6 593.3,81.9 602.6,80.6 613.7,80.4 624.8,80.6 636,80.9 643.3,82.8 651,86.7 662,92.2 673.3,100.6 684.4,107.5 695.6,114.4 706.7,121.4 717.8,132.5 729,145 740,153.3 751,160.3 762,165.8 770,168.7 780.4,172 790.7,173.3 801,175 811.5,175.6 821.9,176 832.2,176.3 840.9,176.8 849.5,181 858.2,185.4" fill="none" stroke="#be222c" stroke-width="1.3" stroke-linejoin="round"/>
<polyline points="20.5,258.5 30,252.6 40.9,241.8 51.7,231 62.5,224.8 71.7,217 81,207.8 90.2,199.4 99.5,190.9 108.8,180 118.6,165.4 131,158.5 140.4,154.8 151.5,152 157,150.2 164.4,152.6 175.6,147.4 186.7,141.9 197.8,136.3 208.9,131.1 218,130.4 225.6,133.5 234.8,137.2 246,138.5 259.3,138.5 268.5,138.9 277.8,143.1 288.9,146.3 300,145.9 309.3,144.4 320.4,144.1 331.5,141.3 342.6,140.4 351.9,138.5 361.1,133 368.5,125.6 375.9,118.1 383.3,114.4 389.3,115.7 398.5,121.3 403,121.9 411.5,116.7 419.8,113 428,119.4 437.4,123 444.8,125 454,129.3 463.3,128.7 472.6,126.9 481.9,125.9 487.4,123 494.8,118.5 504,114.4 511.5,113 519.3,107.8 528.5,98.5 537.8,89.3 547,82.8 556.3,73.5 563.7,65.2 571,60.6 578.5,58.7 587.8,58.7 597,59.3 606.3,63.3 615.6,68 624.8,69.8 630.4,73.5 636,74.4 643.3,80.9 651,86.7 662,100.6 673.3,117.2 684.4,132.5 695.6,142.2 704,147.8 712,164.4 723.3,181 734.4,195 742.8,198.3 754,202.8 765,203.3 780.4,201.9 785.6,197.5 796,195 804.6,192.4 811.5,191.5 818.4,188 827,186.3 837.4,185.4 844.3,191.5 851.2,197.5 858.2,201.5" fill="none" stroke="#1414d2" stroke-width="1.1" stroke-linejoin="round"/>
</g>
<rect x="15" y="39" width="135.5" height="12.8" fill="#3a414b"/><rect x="152.5" y="39" width="138" height="12.8" fill="#3a414b"/>
<text x="15.6" y="49.8" font-size="11" fill="#1616f0" textLength="134" lengthAdjust="spacingAndGlyphs">Exponential_Moving_Average</text>
<text x="154.5" y="49.8" font-size="11" fill="#f01c24" textLength="134" lengthAdjust="spacingAndGlyphs">Exponential_Moving_Average</text>
<rect x="14" y="38.5" width="31" height="21.5" fill="#f1f1f1"/>
<rect x="14" y="38.5" width="31" height="4" fill="#d2d2d2"/>
<defs><linearGradient id="lr" x1="0" y1="0" x2="0" y2="1"><stop offset="0" stop-color="#f04a50"/><stop offset="1" stop-color="#c81820"/></linearGradient><linearGradient id="lb" x1="0" y1="0" x2="0" y2="1"><stop offset="0" stop-color="#28a8e0"/><stop offset="1" stop-color="#1478b8"/></linearGradient></defs>
<rect x="18.3" y="46.2" width="9.4" height="9.6" rx="1.8" fill="url(#lr)" stroke="#b01018" stroke-width="0.6"/>
<rect x="31.4" y="46.2" width="9.4" height="9.6" rx="1.8" fill="url(#lb)" stroke="#1068a0" stroke-width="0.6"/>
<path d="M15.5 290.4V292.6M18.5 290.4V292.5M20.5 290.4V292.5M24.5 290.4V292M28.5 290.4V291.6M31.5 290.4V291.6M34.5 290.4V291.6M38.5 290.4V291.6M41.5 290.4V291.6M44.5 290.4V291.6M48.5 290.3V291.6M51.5 290.2V291.6M54.5 290.3V291.6M58.5 290.3V291.6M60.5 290.4V291.6M64.5 290.4V291.6M68.5 290.4V291.6M71.5 290.4V291.6M74.5 290.4V291.6M78.5 290.4V291.6M81.5 290.4V291.6M85.5 290.4V291.6M88.5 290.4V291.6M91.5 290.4V291.6M94.5 290.3V291.6M98.5 290.2V291.6M101.5 290.1V291.6M104.5 289.9V291.6M108.5 289.8V291.6M111.5 289.6V291.6M115.5 289.4V291.6M118.5 289.3V291.6M121.5 289.9V291.6M125.5 290.2V291.6M128.5 290.4V291.6M131.5 290.4V292.5M135.5 290.4V293.5M138.5 290.4V294.3M141.5 290.4V294.8M145.5 290.4V295M148.5 290.4V295.2M151.5 290.4V295.2M155.5 290.4V294.8M158.5 290.4V294.7M162.5 290.4V295.2M165.5 290.4V295.5M168.5 290.4V295.7M172.5 290.4V295M175.5 290.4V294.4M178.5 290.4V293.1M182.5 290.4V292M185.5 290.4V291.6M188.5 290.4V291.6M192.5 290.4V291.6M195.5 290.4V291.6M198.5 290.4V291.6M202.5 290.4V291.6M205.5 290.4V291.6M208.5 290.4V291.6M212.5 290.4V291.6M215.5 290.4V291.6M218.5 290.4V292.4M222.5 290.4V293.5M225.5 290.4V294.7M228.5 290.4V295.2M232.5 290.4V295M235.5 290.4V294.9M238.5 290.4V294.8M242.5 290.4V294.5M245.5 290.4V293.9M249.5 290.4V293.4M252.5 290.4V293.1M256.5 290.4V292.8M258.5 290.4V292.7M262.5 290.4V292.6M265.5 290.4V292.6M268.5 290.4V292.6M272.5 290.4V292.9M275.5 290.4V293.4M279.5 290.4V293.3M282.5 290.4V293.3M285.5 290.4V293.4M289.5 290.4V293.5M292.5 290.4V293.3M295.5 290.4V292.3M299.5 290.4V291.6M302.5 290.4V291.6M305.5 290.4V291.6M309.5 290.4V291.6M312.5 290.4V291.6M315.5 290.4V291.6M319.5 290.4V291.6M322.5 290.4V291.6M326.5 290.4V291.6M329.5 290.4V291.6M332.5 290.4V291.6M336.5 290.4V291.6M339.5 290.4V291.6M342.5 290.4V291.6M346.5 290.4V291.6M349.5 290.4V291.6M352.5 290V291.6M356.5 289.3V291.6M359.5 288.7V291.6M362.5 288.3V291.6M366.5 288V291.6M369.5 287.8V291.6M372.5 287.4V291.6M376.5 287.7V291.6M379.5 288.4V291.6M382.5 290V291.6M386.5 290.4V292.1M389.5 290.4V293.2M392.5 290.4V294.5M396.5 290.4V295.1M399.5 290.4V295.6M402.5 290.4V295.3M406.5 290.4V294M409.5 290.4V293M413.5 290.4V292.3M416.5 290.4V291.6M419.5 290.4V291.6M423.5 290.4V291.6M426.5 290.4V292.3M429.5 290.4V293.7M433.5 290.4V293.8M436.5 290.4V293.8M439.5 290.4V293.7M442.5 290.4V293.8M446.5 290.4V293.8M449.5 290.4V293.9M452.5 290.4V293.5M456.5 290.4V293.1M459.5 290.4V292.7M463.5 290.4V292.3M466.5 290.4V292M470.5 290.4V291.8M472.5 290.4V291.6M476.5 290.4V291.6M480.5 290.4V291.6M483.5 290.2V291.6M486.5 289.8V291.6M490.5 289.3V291.6M493.5 288.8V291.6M496.5 288.5V291.6M500.5 288.7V291.6M502.5 288.9V291.6M506.5 289.2V291.6M510.5 289.4V291.6M513.5 289.5V291.6M516.5 289.5V291.6M520.5 289.9V291.6M523.5 289.6V291.6M526.5 289.2V291.6M530.5 288.8V291.6M532.5 288.3V291.6M536.5 288.6V291.6M540.5 289.2V291.6M543.5 289.5V291.6M546.5 289.5V291.6M550.5 289.4V291.6M553.5 289.4V291.6M557.5 289.5V291.6M560.5 289.6V291.6M563.5 289.7V291.6M567.5 290.3V291.6M570.5 290.4V291.6M574.5 290.4V292.2M577.5 290.4V293M580.5 290.4V293.8M583.5 290.4V294.3M587.5 290.4V294.9M590.5 290.4V295.3M593.5 290.4V295.8M597.5 290.4V296.1M600.5 290.4V296.4M603.5 290.4V296.6M607.5 290.4V296.8M610.5 290.4V296.8M613.5 290.4V296M616.5 290.4V295.3M620.5 290.4V294.8M623.5 290.4V295.4M627.5 290.4V295.6M630.5 290.4V295M634.5 290.4V294.5M637.5 290.4V294.4M640.5 290.4V294.9M644.5 290.4V295.5M647.5 290.4V295.7M650.5 290.4V295.5M654.5 290.4V295.3M657.5 290.4V295.3M660.5 290.4V295.5M664.5 290.4V296.4M667.5 290.4V297.1M670.5 290.4V297.4M674.5 290.4V297.4M677.5 290.4V297.3M680.5 290.4V297.1M684.5 290.4V296.6M687.5 290.4V294.7M690.5 290.4V293.5M694.5 290.4V292.9M697.5 290.4V292.6M700.5 290.4V292.4M704.5 290.4V292.2M707.5 290.4V292.5M710.5 290.4V293.4M714.5 290.4V294.3M717.5 290.4V294.4M721.5 290.4V293.8M724.5 290.4V293.3M728.5 290.4V293.1M731.5 290.4V292.7M734.5 290.4V291.7M738.5 290.4V291.6M741.5 289.7V291.6M744.5 288.1V291.6M747.5 287.1V291.6M750.5 286.4V291.6M754.5 286.4V291.6M757.5 286.3V291.6M760.5 286.1V291.6M764.5 286V291.6M767.5 285.9V291.6M770.5 286V291.6M774.5 286.2V291.6M777.5 286.6V291.6M780.5 286.9V291.6M784.5 286.3V291.6M787.5 285.8V291.6M790.5 285.6V291.6M793.5 286.6V291.6M797.5 287.5V291.6M800.5 288.2V291.6M803.5 289.6V291.6M806.5 290.3V291.6M810.5 289.7V291.6M813.5 289.1V291.6M816.5 288.6V291.6M819.5 288.7V291.6M822.5 289.2V291.6M826.5 289.7V291.6M829.5 290.2V291.6M832.5 290.4V291.6M836.5 290.4V291.6M839.5 290.4V292.2M842.5 290.4V293.6M845.5 290.4V294.8M848.5 290.4V295.5M852.5 290.4V296.1M855.5 290.4V296.2M858.5 290.4V296.1" stroke="#cc202c" stroke-width="1.8" fill="none" stroke-opacity="0.92"/>
<polyline points="15,282.4 22,282 30,280 50,276 70,274 90,272.4 110,270 118,267.6 125,267.6 134,272 150,279 158,280 168,284.4 176,284.4 184,281.6 196,281 206,280 216,281 230,289.6 238,291 250,292.4 270,292.4 276,294.4 292,296 300,293 320,291.6 330,290.4 350,289 360,285 374,278.4 381,278.4 390,284 402,291 410,288 422,285 430,291.6 440,294.4 450,296 460,295 474,293 486,289.6 496,285.6 510,284 520,283 534,276.4 544,276 554,274.4 564,272.4 570,273 580,278 594,284 610,291 620,292 626,295.6 636,295.6 646,301 660,305.6 670,312 676,315 684,318.4 692,315 706,314 716,319.6 730,320.4 740,317 750,309 760,305 770,301 780,298 790,291 800,290 806,291.6 818,287 830,287 838,288 846,295 852,298.4 858,300.6" fill="none" stroke="#0a0a7e" stroke-width="1.4" stroke-linejoin="round"/>
<polyline points="15,280.4 30,280 50,277 70,274.6 90,273 110,271.6 122,269 128,268.4 140,270 150,273.6 160,276 170,279 180,281 196,281 206,280 216,280.4 226,282.4 232,285 242,287 250,289.6 260,290.4 270,290.4 280,292 294,293 306,292.4 320,291.6 330,290.4 350,289.6 360,288 370,284.4 378,282 385,280 394,281.6 404,285.6 414,285.6 422,285.6 430,288 440,291 450,292.4 462,293 474,292.4 486,291 498,288.4 510,286 518,285 530,281 540,278.4 554,276.4 564,274 572,273.2 582,275 594,278 606,282 616,286 626,289.6 636,291.6 646,295 656,299 666,302 670,304 678,308 686,312 696,312.6 706,312.6 716,315 726,317.6 738,318 746,316.4 756,312.4 766,309 776,305 786,300 796,295 802,293 814,291 824,289 832,287.6 840,287.6 846,290 852,292 859,294.4" fill="none" stroke="#d81a24" stroke-width="0.9" stroke-linejoin="round"/>
<g fill="#f01c28"><circle cx="15.5" cy="280.4" r="1.65"/><circle cx="18.5" cy="280.3" r="1.65"/><circle cx="20.5" cy="280.2" r="1.65"/><circle cx="24.5" cy="280.2" r="1.65"/><circle cx="28.5" cy="280" r="1.65"/><circle cx="31.5" cy="279.8" r="1.65"/><circle cx="34.5" cy="279.3" r="1.65"/><circle cx="38.5" cy="278.7" r="1.65"/><circle cx="41.5" cy="278.3" r="1.65"/><circle cx="44.5" cy="277.8" r="1.65"/><circle cx="48.5" cy="277.3" r="1.65"/><circle cx="51.5" cy="276.8" r="1.65"/><circle cx="54.5" cy="276.5" r="1.65"/><circle cx="58.5" cy="276" r="1.65"/><circle cx="60.5" cy="275.7" r="1.65"/><circle cx="64.5" cy="275.3" r="1.65"/><circle cx="68.5" cy="274.8" r="1.65"/><circle cx="71.5" cy="274.5" r="1.65"/><circle cx="74.5" cy="274.2" r="1.65"/><circle cx="78.5" cy="273.9" r="1.65"/><circle cx="81.5" cy="273.7" r="1.65"/><circle cx="85.5" cy="273.4" r="1.65"/><circle cx="88.5" cy="273.1" r="1.65"/><circle cx="91.5" cy="272.9" r="1.65"/><circle cx="94.5" cy="272.6" r="1.65"/><circle cx="98.5" cy="272.4" r="1.65"/><circle cx="101.5" cy="272.2" r="1.65"/><circle cx="104.5" cy="272" r="1.65"/><circle cx="108.5" cy="271.7" r="1.65"/><circle cx="111.5" cy="271.3" r="1.65"/><circle cx="115.5" cy="270.4" r="1.65"/><circle cx="118.5" cy="269.7" r="1.65"/><circle cx="121.5" cy="269" r="1.65"/><circle cx="125.5" cy="268.7" r="1.65"/><circle cx="128.5" cy="268.4" r="1.65"/><circle cx="131.5" cy="268.9" r="1.65"/><circle cx="135.5" cy="269.4" r="1.65"/><circle cx="138.5" cy="269.8" r="1.65"/><circle cx="141.5" cy="270.7" r="1.65"/><circle cx="145.5" cy="271.9" r="1.65"/><circle cx="148.5" cy="273.1" r="1.65"/><circle cx="151.5" cy="274" r="1.65"/><circle cx="155.5" cy="274.8" r="1.65"/><circle cx="158.5" cy="275.6" r="1.65"/><circle cx="162.5" cy="276.7" r="1.65"/><circle cx="165.5" cy="277.6" r="1.65"/><circle cx="168.5" cy="278.6" r="1.65"/><circle cx="172.5" cy="279.4" r="1.65"/><circle cx="175.5" cy="280.1" r="1.65"/><circle cx="178.5" cy="280.8" r="1.65"/><circle cx="182.5" cy="281" r="1.65"/><circle cx="185.5" cy="281" r="1.65"/><circle cx="188.5" cy="281" r="1.65"/><circle cx="192.5" cy="281" r="1.65"/><circle cx="195.5" cy="281" r="1.65"/><circle cx="198.5" cy="280.7" r="1.65"/><circle cx="202.5" cy="280.4" r="1.65"/><circle cx="205.5" cy="280" r="1.65"/><circle cx="208.5" cy="280.1" r="1.65"/><circle cx="212.5" cy="280.2" r="1.65"/><circle cx="215.5" cy="280.4" r="1.65"/><circle cx="218.5" cy="280.9" r="1.65"/><circle cx="222.5" cy="281.6" r="1.65"/><circle cx="225.5" cy="282.3" r="1.65"/><circle cx="228.5" cy="283.7" r="1.65"/><circle cx="232.5" cy="285" r="1.65"/><circle cx="235.5" cy="285.7" r="1.65"/><circle cx="238.5" cy="286.4" r="1.65"/><circle cx="242.5" cy="287.1" r="1.65"/><circle cx="245.5" cy="288.3" r="1.65"/><circle cx="249.5" cy="289.4" r="1.65"/><circle cx="252.5" cy="289.8" r="1.65"/><circle cx="256.5" cy="290.1" r="1.65"/><circle cx="258.5" cy="290.3" r="1.65"/><circle cx="262.5" cy="290.4" r="1.65"/><circle cx="265.5" cy="290.4" r="1.65"/><circle cx="268.5" cy="290.4" r="1.65"/><circle cx="272.5" cy="290.8" r="1.65"/><circle cx="275.5" cy="291.3" r="1.65"/><circle cx="279.5" cy="291.9" r="1.65"/><circle cx="282.5" cy="292.2" r="1.65"/><circle cx="285.5" cy="292.4" r="1.65"/><circle cx="289.5" cy="292.7" r="1.65"/><circle cx="292.5" cy="292.9" r="1.65"/><circle cx="295.5" cy="292.9" r="1.65"/><circle cx="299.5" cy="292.7" r="1.65"/><circle cx="302.5" cy="292.6" r="1.65"/><circle cx="305.5" cy="292.4" r="1.65"/><circle cx="309.5" cy="292.2" r="1.65"/><circle cx="312.5" cy="292" r="1.65"/><circle cx="315.5" cy="291.8" r="1.65"/><circle cx="319.5" cy="291.6" r="1.65"/><circle cx="322.5" cy="291.3" r="1.65"/><circle cx="326.5" cy="290.8" r="1.65"/><circle cx="329.5" cy="290.4" r="1.65"/><circle cx="332.5" cy="290.3" r="1.65"/><circle cx="336.5" cy="290.1" r="1.65"/><circle cx="339.5" cy="290" r="1.65"/><circle cx="342.5" cy="289.9" r="1.65"/><circle cx="346.5" cy="289.7" r="1.65"/><circle cx="349.5" cy="289.6" r="1.65"/><circle cx="352.5" cy="289.2" r="1.65"/><circle cx="356.5" cy="288.6" r="1.65"/><circle cx="359.5" cy="288.1" r="1.65"/><circle cx="362.5" cy="286.9" r="1.65"/><circle cx="366.5" cy="285.7" r="1.65"/><circle cx="369.5" cy="284.6" r="1.65"/><circle cx="372.5" cy="283.6" r="1.65"/><circle cx="376.5" cy="282.5" r="1.65"/><circle cx="379.5" cy="281.6" r="1.65"/><circle cx="382.5" cy="280.7" r="1.65"/><circle cx="386.5" cy="280.2" r="1.65"/><circle cx="389.5" cy="280.8" r="1.65"/><circle cx="392.5" cy="281.4" r="1.65"/><circle cx="396.5" cy="282.5" r="1.65"/><circle cx="399.5" cy="283.8" r="1.65"/><circle cx="402.5" cy="285.2" r="1.65"/><circle cx="406.5" cy="285.6" r="1.65"/><circle cx="409.5" cy="285.6" r="1.65"/><circle cx="413.5" cy="285.6" r="1.65"/><circle cx="416.5" cy="285.6" r="1.65"/><circle cx="419.5" cy="285.6" r="1.65"/><circle cx="423.5" cy="286.1" r="1.65"/><circle cx="426.5" cy="286.9" r="1.65"/><circle cx="429.5" cy="287.9" r="1.65"/><circle cx="433.5" cy="289" r="1.65"/><circle cx="436.5" cy="289.9" r="1.65"/><circle cx="439.5" cy="290.9" r="1.65"/><circle cx="442.5" cy="291.4" r="1.65"/><circle cx="446.5" cy="291.9" r="1.65"/><circle cx="449.5" cy="292.3" r="1.65"/><circle cx="452.5" cy="292.5" r="1.65"/><circle cx="456.5" cy="292.7" r="1.65"/><circle cx="459.5" cy="292.9" r="1.65"/><circle cx="463.5" cy="292.9" r="1.65"/><circle cx="466.5" cy="292.8" r="1.65"/><circle cx="470.5" cy="292.6" r="1.65"/><circle cx="472.5" cy="292.4" r="1.65"/><circle cx="476.5" cy="292.1" r="1.65"/><circle cx="480.5" cy="291.7" r="1.65"/><circle cx="483.5" cy="291.3" r="1.65"/><circle cx="486.5" cy="290.9" r="1.65"/><circle cx="490.5" cy="290.1" r="1.65"/><circle cx="493.5" cy="289.4" r="1.65"/><circle cx="496.5" cy="288.7" r="1.65"/><circle cx="500.5" cy="287.9" r="1.65"/><circle cx="502.5" cy="287.4" r="1.65"/><circle cx="506.5" cy="286.7" r="1.65"/><circle cx="510.5" cy="286" r="1.65"/><circle cx="513.5" cy="285.6" r="1.65"/><circle cx="516.5" cy="285.2" r="1.65"/><circle cx="520.5" cy="284.3" r="1.65"/><circle cx="523.5" cy="283.2" r="1.65"/><circle cx="526.5" cy="282.1" r="1.65"/><circle cx="530.5" cy="281" r="1.65"/><circle cx="532.5" cy="280.2" r="1.65"/><circle cx="536.5" cy="279.3" r="1.65"/><circle cx="540.5" cy="278.4" r="1.65"/><circle cx="543.5" cy="277.9" r="1.65"/><circle cx="546.5" cy="277.4" r="1.65"/><circle cx="550.5" cy="276.9" r="1.65"/><circle cx="553.5" cy="276.5" r="1.65"/><circle cx="557.5" cy="275.6" r="1.65"/><circle cx="560.5" cy="274.9" r="1.65"/><circle cx="563.5" cy="274.1" r="1.65"/><circle cx="567.5" cy="273.7" r="1.65"/><circle cx="570.5" cy="273.3" r="1.65"/><circle cx="574.5" cy="273.6" r="1.65"/><circle cx="577.5" cy="274.1" r="1.65"/><circle cx="580.5" cy="274.7" r="1.65"/><circle cx="583.5" cy="275.4" r="1.65"/><circle cx="587.5" cy="276.4" r="1.65"/><circle cx="590.5" cy="277.1" r="1.65"/><circle cx="593.5" cy="277.9" r="1.65"/><circle cx="597.5" cy="279.1" r="1.65"/><circle cx="600.5" cy="280.2" r="1.65"/><circle cx="603.5" cy="281.3" r="1.65"/><circle cx="607.5" cy="282.5" r="1.65"/><circle cx="610.5" cy="283.8" r="1.65"/><circle cx="613.5" cy="285.1" r="1.65"/><circle cx="616.5" cy="286.4" r="1.65"/><circle cx="620.5" cy="287.7" r="1.65"/><circle cx="623.5" cy="288.8" r="1.65"/><circle cx="627.5" cy="289.8" r="1.65"/><circle cx="630.5" cy="290.5" r="1.65"/><circle cx="634.5" cy="291.3" r="1.65"/><circle cx="637.5" cy="292.1" r="1.65"/><circle cx="640.5" cy="293.2" r="1.65"/><circle cx="644.5" cy="294.4" r="1.65"/><circle cx="647.5" cy="295.6" r="1.65"/><circle cx="650.5" cy="296.9" r="1.65"/><circle cx="654.5" cy="298.2" r="1.65"/><circle cx="657.5" cy="299.4" r="1.65"/><circle cx="660.5" cy="300.4" r="1.65"/><circle cx="664.5" cy="301.4" r="1.65"/><circle cx="667.5" cy="302.8" r="1.65"/><circle cx="670.5" cy="304.4" r="1.65"/><circle cx="674.5" cy="306" r="1.65"/><circle cx="677.5" cy="307.8" r="1.65"/><circle cx="680.5" cy="309.4" r="1.65"/><circle cx="684.5" cy="311.2" r="1.65"/><circle cx="687.5" cy="312.1" r="1.65"/><circle cx="690.5" cy="312.3" r="1.65"/><circle cx="694.5" cy="312.5" r="1.65"/><circle cx="697.5" cy="312.6" r="1.65"/><circle cx="700.5" cy="312.6" r="1.65"/><circle cx="704.5" cy="312.6" r="1.65"/><circle cx="707.5" cy="313" r="1.65"/><circle cx="710.5" cy="313.8" r="1.65"/><circle cx="714.5" cy="314.6" r="1.65"/><circle cx="717.5" cy="315.5" r="1.65"/><circle cx="721.5" cy="316.4" r="1.65"/><circle cx="724.5" cy="317.3" r="1.65"/><circle cx="728.5" cy="317.7" r="1.65"/><circle cx="731.5" cy="317.8" r="1.65"/><circle cx="734.5" cy="317.9" r="1.65"/><circle cx="738.5" cy="318" r="1.65"/><circle cx="741.5" cy="317.3" r="1.65"/><circle cx="744.5" cy="316.6" r="1.65"/><circle cx="747.5" cy="315.7" r="1.65"/><circle cx="750.5" cy="314.4" r="1.65"/><circle cx="754.5" cy="313" r="1.65"/><circle cx="757.5" cy="311.9" r="1.65"/><circle cx="760.5" cy="310.8" r="1.65"/><circle cx="764.5" cy="309.7" r="1.65"/><circle cx="767.5" cy="308.4" r="1.65"/><circle cx="770.5" cy="307" r="1.65"/><circle cx="774.5" cy="305.7" r="1.65"/><circle cx="777.5" cy="304.2" r="1.65"/><circle cx="780.5" cy="302.6" r="1.65"/><circle cx="784.5" cy="300.9" r="1.65"/><circle cx="787.5" cy="299.3" r="1.65"/><circle cx="790.5" cy="297.7" r="1.65"/><circle cx="793.5" cy="296.1" r="1.65"/><circle cx="797.5" cy="294.6" r="1.65"/><circle cx="800.5" cy="293.6" r="1.65"/><circle cx="803.5" cy="292.7" r="1.65"/><circle cx="806.5" cy="292.2" r="1.65"/><circle cx="810.5" cy="291.6" r="1.65"/><circle cx="813.5" cy="291.1" r="1.65"/><circle cx="816.5" cy="290.5" r="1.65"/><circle cx="819.5" cy="289.8" r="1.65"/><circle cx="822.5" cy="289.2" r="1.65"/><circle cx="826.5" cy="288.6" r="1.65"/><circle cx="829.5" cy="288" r="1.65"/><circle cx="832.5" cy="287.6" r="1.65"/><circle cx="836.5" cy="287.6" r="1.65"/><circle cx="839.5" cy="287.6" r="1.65"/><circle cx="842.5" cy="288.6" r="1.65"/><circle cx="845.5" cy="289.8" r="1.65"/><circle cx="848.5" cy="291" r="1.65"/><circle cx="852.5" cy="292" r="1.65"/><circle cx="855.5" cy="293.1" r="1.65"/><circle cx="858.5" cy="294.3" r="1.65"/></g>
<text x="15.5" y="276.3" font-size="11.5" fill="#10107a" textLength="30" lengthAdjust="spacingAndGlyphs">MACD</text>
<line x1="14.5" y1="346.6" x2="858.5" y2="346.6" stroke="#1414ac" stroke-width="1.45"/>
<line x1="14.5" y1="388.8" x2="858.5" y2="388.8" stroke="#1414ac" stroke-width="1.45"/>
<polyline points="15,361.4 18,361 22,356 26,353 30,351 35,347.4 40,347 43,345 47,343.4 51,343.4 54.4,350 59,347.4 62,346.6 65,340.6 68,344 71,345 74.4,348.6 78,344 81,342 85,343.4 89,341.4 93,345.4 96.4,347.4 99,346 102,341 106,337 110,334 114,333.4 118,334 121.4,332.6 124,339 126,346.6 129,354.6 133,352 138,350.6 141.6,366 145,362 149,359 153,359.4 157,358.6 160,362 163,374 166,363 170,361.4 175,359 179,357 182.4,354 186,357 190,357 194,355 198,352 202,354.6 205,354 209,357.4 212,358.6 216,363 220,366 222.4,368 226,377.4 229,374 234,371.4 239,369.4 242,370.6 245,367.4 249,370 252.4,371.4 255,367 259,366.6 262.4,360 266,367 269,373 272,375 275.6,380.6 279.6,372 282.4,374 286,373 289.6,375 293,370 296,369.4 299,364 302.4,360.6 305.6,366 309,367.4 313,369.4 316,370.6 319,364 322.4,356 326,361 329.6,365.4 333,362 337,364.6 341,364.6 345,363 349,361.4 352.4,356 356.4,354.6 360,349 363.6,344 366.4,340.6 369,340.6 372.4,338.6 375,341 377.6,345 379.6,343.4 381,352 384,359 387,366 389.6,376 393,374 397,374.6 400,373 403,374 406,360 409,356 413,354.6 417,352.6 420,361 423.6,373 427,377.4 430,374.6 434,375.4 437,375 440,372.6 443,370.6 446,375.4 449,377.4 452,377 454,373 459,368.6 463,366 467,367 470,362.6 474,364 477,365 480.4,361.4 483,366.6 486,355 490,354.6 494,355 499,354.6 503.6,355 507,362 510,360.6 513,360 516,353 519,349.4 522,348.6 524.4,350 527,344 530,342.6 533,343.4 535,346 538,347 541,352 544,349.4 547.6,344.6 550,346 553,349 556,346.6 560,342.6 563.6,339 565.6,345 567.6,354.6 571,356.6 575,356 578,358 581,363 584,362 588,366 591,363.4 594,366.6 598,368.6 601,369.4 604,376.6 607,377.4 610,374 614,373 618,372.6 621,367.4 623,373 626,380.6 629,373 631.6,368.6 635,372.6 638,376.6 642,381 645,383.4 648,382 652,382.6 656,384 660,388 663,392 667,393 670,395.4 674,397 678,398 681,400 684.4,398 686,389 688,383.4 691,384.6 694,384 697,385 701,379 704,384 706,391 709,395.4 713,397 717,394 720,395 723,392 725,390 728,392 731,389 734,388.6 738,383 742,376.6 745,374 749,376 754,379.4 758,374 762,371.4 767,369.4 771,369 774.4,371.4 778,368 782,365 784.4,355 788,354 791,357 795,365 798,366 801,360.6 805,373.4 809,364 813,359.4 816,360 819,362 822,359.4 826,363 829,366 832,370.6 835,364.6 839,364.2 841.6,378 845,378.6 849,384 852,379 858,379.4" fill="none" stroke="#ef8a2c" stroke-width="1.05" stroke-linejoin="round" clip-path="url(#cmid)"/>
<polyline points="15,361.4 18,361 22,356 26,353 30,351 35,347.4 40,347 43,345 47,343.4 51,343.4 54.4,350 59,347.4 62,346.6 65,340.6 68,344 71,345 74.4,348.6 78,344 81,342 85,343.4 89,341.4 93,345.4 96.4,347.4 99,346 102,341 106,337 110,334 114,333.4 118,334 121.4,332.6 124,339 126,346.6 129,354.6 133,352 138,350.6 141.6,366 145,362 149,359 153,359.4 157,358.6 160,362 163,374 166,363 170,361.4 175,359 179,357 182.4,354 186,357 190,357 194,355 198,352 202,354.6 205,354 209,357.4 212,358.6 216,363 220,366 222.4,368 226,377.4 229,374 234,371.4 239,369.4 242,370.6 245,367.4 249,370 252.4,371.4 255,367 259,366.6 262.4,360 266,367 269,373 272,375 275.6,380.6 279.6,372 282.4,374 286,373 289.6,375 293,370 296,369.4 299,364 302.4,360.6 305.6,366 309,367.4 313,369.4 316,370.6 319,364 322.4,356 326,361 329.6,365.4 333,362 337,364.6 341,364.6 345,363 349,361.4 352.4,356 356.4,354.6 360,349 363.6,344 366.4,340.6 369,340.6 372.4,338.6 375,341 377.6,345 379.6,343.4 381,352 384,359 387,366 389.6,376 393,374 397,374.6 400,373 403,374 406,360 409,356 413,354.6 417,352.6 420,361 423.6,373 427,377.4 430,374.6 434,375.4 437,375 440,372.6 443,370.6 446,375.4 449,377.4 452,377 454,373 459,368.6 463,366 467,367 470,362.6 474,364 477,365 480.4,361.4 483,366.6 486,355 490,354.6 494,355 499,354.6 503.6,355 507,362 510,360.6 513,360 516,353 519,349.4 522,348.6 524.4,350 527,344 530,342.6 533,343.4 535,346 538,347 541,352 544,349.4 547.6,344.6 550,346 553,349 556,346.6 560,342.6 563.6,339 565.6,345 567.6,354.6 571,356.6 575,356 578,358 581,363 584,362 588,366 591,363.4 594,366.6 598,368.6 601,369.4 604,376.6 607,377.4 610,374 614,373 618,372.6 621,367.4 623,373 626,380.6 629,373 631.6,368.6 635,372.6 638,376.6 642,381 645,383.4 648,382 652,382.6 656,384 660,388 663,392 667,393 670,395.4 674,397 678,398 681,400 684.4,398 686,389 688,383.4 691,384.6 694,384 697,385 701,379 704,384 706,391 709,395.4 713,397 717,394 720,395 723,392 725,390 728,392 731,389 734,388.6 738,383 742,376.6 745,374 749,376 754,379.4 758,374 762,371.4 767,369.4 771,369 774.4,371.4 778,368 782,365 784.4,355 788,354 791,357 795,365 798,366 801,360.6 805,373.4 809,364 813,359.4 816,360 819,362 822,359.4 826,363 829,366 832,370.6 835,364.6 839,364.2 841.6,378 845,378.6 849,384 852,379 858,379.4" fill="none" stroke="#e020e0" stroke-width="1.05" stroke-linejoin="round" clip-path="url(#c70)"/>
<polyline points="15,361.4 18,361 22,356 26,353 30,351 35,347.4 40,347 43,345 47,343.4 51,343.4 54.4,350 59,347.4 62,346.6 65,340.6 68,344 71,345 74.4,348.6 78,344 81,342 85,343.4 89,341.4 93,345.4 96.4,347.4 99,346 102,341 106,337 110,334 114,333.4 118,334 121.4,332.6 124,339 126,346.6 129,354.6 133,352 138,350.6 141.6,366 145,362 149,359 153,359.4 157,358.6 160,362 163,374 166,363 170,361.4 175,359 179,357 182.4,354 186,357 190,357 194,355 198,352 202,354.6 205,354 209,357.4 212,358.6 216,363 220,366 222.4,368 226,377.4 229,374 234,371.4 239,369.4 242,370.6 245,367.4 249,370 252.4,371.4 255,367 259,366.6 262.4,360 266,367 269,373 272,375 275.6,380.6 279.6,372 282.4,374 286,373 289.6,375 293,370 296,369.4 299,364 302.4,360.6 305.6,366 309,367.4 313,369.4 316,370.6 319,364 322.4,356 326,361 329.6,365.4 333,362 337,364.6 341,364.6 345,363 349,361.4 352.4,356 356.4,354.6 360,349 363.6,344 366.4,340.6 369,340.6 372.4,338.6 375,341 377.6,345 379.6,343.4 381,352 384,359 387,366 389.6,376 393,374 397,374.6 400,373 403,374 406,360 409,356 413,354.6 417,352.6 420,361 423.6,373 427,377.4 430,374.6 434,375.4 437,375 440,372.6 443,370.6 446,375.4 449,377.4 452,377 454,373 459,368.6 463,366 467,367 470,362.6 474,364 477,365 480.4,361.4 483,366.6 486,355 490,354.6 494,355 499,354.6 503.6,355 507,362 510,360.6 513,360 516,353 519,349.4 522,348.6 524.4,350 527,344 530,342.6 533,343.4 535,346 538,347 541,352 544,349.4 547.6,344.6 550,346 553,349 556,346.6 560,342.6 563.6,339 565.6,345 567.6,354.6 571,356.6 575,356 578,358 581,363 584,362 588,366 591,363.4 594,366.6 598,368.6 601,369.4 604,376.6 607,377.4 610,374 614,373 618,372.6 621,367.4 623,373 626,380.6 629,373 631.6,368.6 635,372.6 638,376.6 642,381 645,383.4 648,382 652,382.6 656,384 660,388 663,392 667,393 670,395.4 674,397 678,398 681,400 684.4,398 686,389 688,383.4 691,384.6 694,384 697,385 701,379 704,384 706,391 709,395.4 713,397 717,394 720,395 723,392 725,390 728,392 731,389 734,388.6 738,383 742,376.6 745,374 749,376 754,379.4 758,374 762,371.4 767,369.4 771,369 774.4,371.4 778,368 782,365 784.4,355 788,354 791,357 795,365 798,366 801,360.6 805,373.4 809,364 813,359.4 816,360 819,362 822,359.4 826,363 829,366 832,370.6 835,364.6 839,364.2 841.6,378 845,378.6 849,384 852,379 858,379.4" fill="none" stroke="#20e030" stroke-width="1.05" stroke-linejoin="round" clip-path="url(#c30)"/>
<text x="15.5" y="342" font-size="11.5" fill="#f0903c" textLength="16" lengthAdjust="spacingAndGlyphs">RSI</text>
<g shape-rendering="crispEdges" fill="none">
<rect x="14.5" y="38.5" width="873.0" height="220.0" stroke="#a9b9c9" stroke-width="1"/>
<rect x="14.5" y="264.5" width="873.0" height="59.0" stroke="#a9b9c9" stroke-width="1"/>
<rect x="14.5" y="329.5" width="873.0" height="73.0" stroke="#a9b9c9" stroke-width="1"/>
<line x1="887.5" y1="40.2" x2="891.5" y2="40.2" stroke="#a9b9c9"/>
<line x1="887.5" y1="72.1" x2="891.5" y2="72.1" stroke="#a9b9c9"/>
<line x1="887.5" y1="103.3" x2="891.5" y2="103.3" stroke="#a9b9c9"/>
<line x1="887.5" y1="135.2" x2="891.5" y2="135.2" stroke="#a9b9c9"/>
<line x1="887.5" y1="166.6" x2="891.5" y2="166.6" stroke="#a9b9c9"/>
<line x1="887.5" y1="197.2" x2="891.5" y2="197.2" stroke="#a9b9c9"/>
<line x1="887.5" y1="291" x2="891.5" y2="291" stroke="#a9b9c9"/>
<line x1="887.5" y1="366.5" x2="891.5" y2="366.5" stroke="#a9b9c9"/>
<line x1="31.5" y1="402.5" x2="31.5" y2="406" stroke="#a9b9c9"/>
<line x1="51.5" y1="402.5" x2="51.5" y2="406" stroke="#a9b9c9"/>
<line x1="71.5" y1="402.5" x2="71.5" y2="406" stroke="#a9b9c9"/>
<line x1="91.5" y1="402.5" x2="91.5" y2="406" stroke="#a9b9c9"/>
<line x1="111.5" y1="402.5" x2="111.5" y2="406" stroke="#a9b9c9"/>
<line x1="131.5" y1="402.5" x2="131.5" y2="406" stroke="#a9b9c9"/>
<line x1="152.5" y1="402.5" x2="152.5" y2="406" stroke="#a9b9c9"/>
<line x1="172.5" y1="402.5" x2="172.5" y2="406" stroke="#a9b9c9"/>
<line x1="192.5" y1="402.5" x2="192.5" y2="406" stroke="#a9b9c9"/>
<line x1="212.5" y1="402.5" x2="212.5" y2="406" stroke="#a9b9c9"/>
<line x1="232.5" y1="402.5" x2="232.5" y2="406" stroke="#a9b9c9"/>
<line x1="252.5" y1="402.5" x2="252.5" y2="406" stroke="#a9b9c9"/>
<line x1="272.5" y1="402.5" x2="272.5" y2="406" stroke="#a9b9c9"/>
<line x1="292.5" y1="402.5" x2="292.5" y2="406" stroke="#a9b9c9"/>
<line x1="312.5" y1="402.5" x2="312.5" y2="406" stroke="#a9b9c9"/>
<line x1="332.5" y1="402.5" x2="332.5" y2="406" stroke="#a9b9c9"/>
<line x1="352.5" y1="402.5" x2="352.5" y2="406" stroke="#a9b9c9"/>
<line x1="372.5" y1="402.5" x2="372.5" y2="406" stroke="#a9b9c9"/>
<line x1="393.5" y1="402.5" x2="393.5" y2="406" stroke="#a9b9c9"/>
<line x1="413.5" y1="402.5" x2="413.5" y2="406" stroke="#a9b9c9"/>
<line x1="433.5" y1="402.5" x2="433.5" y2="406" stroke="#a9b9c9"/>
<line x1="453.5" y1="402.5" x2="453.5" y2="406" stroke="#a9b9c9"/>
<line x1="473.5" y1="402.5" x2="473.5" y2="406" stroke="#a9b9c9"/>
<line x1="493.5" y1="402.5" x2="493.5" y2="406" stroke="#a9b9c9"/>
<line x1="513.5" y1="402.5" x2="513.5" y2="406" stroke="#a9b9c9"/>
<line x1="533.5" y1="402.5" x2="533.5" y2="406" stroke="#a9b9c9"/>
<line x1="553.5" y1="402.5" x2="553.5" y2="406" stroke="#a9b9c9"/>
<line x1="573.5" y1="402.5" x2="573.5" y2="406" stroke="#a9b9c9"/>
<line x1="593.5" y1="402.5" x2="593.5" y2="406" stroke="#a9b9c9"/>
<line x1="613.5" y1="402.5" x2="613.5" y2="406" stroke="#a9b9c9"/>
<line x1="634.5" y1="402.5" x2="634.5" y2="406" stroke="#a9b9c9"/>
<line x1="654.5" y1="402.5" x2="654.5" y2="406" stroke="#a9b9c9"/>
<line x1="674.5" y1="402.5" x2="674.5" y2="406" stroke="#a9b9c9"/>
<line x1="694.5" y1="402.5" x2="694.5" y2="406" stroke="#a9b9c9"/>
<line x1="714.5" y1="402.5" x2="714.5" y2="406" stroke="#a9b9c9"/>
<line x1="734.5" y1="402.5" x2="734.5" y2="406" stroke="#a9b9c9"/>
<line x1="754.5" y1="402.5" x2="754.5" y2="406" stroke="#a9b9c9"/>
<line x1="774.5" y1="402.5" x2="774.5" y2="406" stroke="#a9b9c9"/>
<line x1="794.5" y1="402.5" x2="794.5" y2="406" stroke="#a9b9c9"/>
<line x1="814.5" y1="402.5" x2="814.5" y2="406" stroke="#a9b9c9"/>
<line x1="834.5" y1="402.5" x2="834.5" y2="406" stroke="#a9b9c9"/>
<line x1="855.5" y1="402.5" x2="855.5" y2="406" stroke="#a9b9c9"/>
<line x1="875.5" y1="402.5" x2="875.5" y2="406" stroke="#a9b9c9"/>
</g>
<line x1="15" y1="381" x2="15" y2="405.5" stroke="#bfe9dc" stroke-width="2"/>
<rect x="15.8" y="379.8" width="67" height="18.6" rx="2.5" fill="#62738a" stroke="#a6b6ca" stroke-width="1"/>
<text x="49.5" y="393" font-size="11" fill="#f4f6f8" stroke="#f4f6f8" stroke-width="0.25" text-anchor="middle">Июль 2020</text>
<line x1="131.5" y1="381" x2="131.5" y2="405.5" stroke="#bfe9dc" stroke-width="2"/>
<rect x="132.3" y="379.8" width="58.5" height="18.6" rx="2.5" fill="#62738a" stroke="#a6b6ca" stroke-width="1"/>
<text x="161.8" y="393" font-size="11" fill="#f4f6f8" stroke="#f4f6f8" stroke-width="0.25" text-anchor="middle">Авг 2020</text>
<line x1="553.5" y1="381" x2="553.5" y2="405.5" stroke="#bfe9dc" stroke-width="2"/>
<rect x="554.3" y="379.8" width="58.5" height="18.6" rx="2.5" fill="#62738a" stroke="#a6b6ca" stroke-width="1"/>
<text x="583.8" y="393" font-size="11" fill="#f4f6f8" stroke="#f4f6f8" stroke-width="0.25" text-anchor="middle">Сен 2020</text>
<g font-size="10.8" fill="#f4f6f8" stroke="#f4f6f8" stroke-width="0.3">
<text x="895" y="47.1">1.3400</text>
<text x="895" y="79">1.3300</text>
<text x="895" y="110.2">1.3200</text>
<text x="895" y="142.1">1.3100</text>
<text x="895" y="173.5">1.3000</text>
<text x="895" y="204.1">1.2900</text>
<text x="895" y="235.9">1.2800</text>
<text x="895" y="298">-0.00</text>
<text x="895" y="372.5">50</text>
<text x="31.5" y="424.8" font-size="10.5" text-anchor="middle">27</text>
<text x="51.5" y="424.8" font-size="10.5" text-anchor="middle">28</text>
<text x="71.5" y="424.8" font-size="10.5" text-anchor="middle">29</text>
<text x="91.5" y="424.8" font-size="10.5" text-anchor="middle">30</text>
<text x="111.5" y="424.8" font-size="10.5" text-anchor="middle">31</text>
<text x="131.5" y="424.8" font-size="10.5" text-anchor="middle">3</text>
<text x="152.5" y="424.8" font-size="10.5" text-anchor="middle">4</text>
<text x="172.5" y="424.8" font-size="10.5" text-anchor="middle">5</text>
<text x="192.5" y="424.8" font-size="10.5" text-anchor="middle">6</text>
<text x="212.5" y="424.8" font-size="10.5" text-anchor="middle">7</text>
<text x="232.5" y="424.8" font-size="10.5" text-anchor="middle">10</text>
<text x="252.5" y="424.8" font-size="10.5" text-anchor="middle">11</text>
<text x="272.5" y="424.8" font-size="10.5" text-anchor="middle">12</text>
<text x="292.5" y="424.8" font-size="10.5" text-anchor="middle">13</text>
<text x="312.5" y="424.8" font-size="10.5" text-anchor="middle">14</text>
<text x="332.5" y="424.8" font-size="10.5" text-anchor="middle">17</text>
<text x="352.5" y="424.8" font-size="10.5" text-anchor="middle">18</text>
<text x="372.5" y="424.8" font-size="10.5" text-anchor="middle">19</text>
<text x="393.5" y="424.8" font-size="10.5" text-anchor="middle">20</text>
<text x="413.5" y="424.8" font-size="10.5" text-anchor="middle">21</text>
<text x="433.5" y="424.8" font-size="10.5" text-anchor="middle">24</text>
<text x="453.5" y="424.8" font-size="10.5" text-anchor="middle">25</text>
<text x="473.5" y="424.8" font-size="10.5" text-anchor="middle">26</text>
<text x="493.5" y="424.8" font-size="10.5" text-anchor="middle">27</text>
<text x="513.5" y="424.8" font-size="10.5" text-anchor="middle">28</text>
<text x="533.5" y="424.8" font-size="10.5" text-anchor="middle">31</text>
<text x="553.5" y="424.8" font-size="10.5" text-anchor="middle">1</text>
<text x="573.5" y="424.8" font-size="10.5" text-anchor="middle">2</text>
<text x="593.5" y="424.8" font-size="10.5" text-anchor="middle">3</text>
<text x="613.5" y="424.8" font-size="10.5" text-anchor="middle">4</text>
<text x="634.5" y="424.8" font-size="10.5" text-anchor="middle">7</text>
<text x="654.5" y="424.8" font-size="10.5" text-anchor="middle">8</text>
<text x="674.5" y="424.8" font-size="10.5" text-anchor="middle">9</text>
<text x="694.5" y="424.8" font-size="10.5" text-anchor="middle">10</text>
<text x="714.5" y="424.8" font-size="10.5" text-anchor="middle">11</text>
<text x="734.5" y="424.8" font-size="10.5" text-anchor="middle">14</text>
<text x="754.5" y="424.8" font-size="10.5" text-anchor="middle">15</text>
<text x="774.5" y="424.8" font-size="10.5" text-anchor="middle">16</text>
<text x="794.5" y="424.8" font-size="10.5" text-anchor="middle">17</text>
<text x="814.5" y="424.8" font-size="10.5" text-anchor="middle">18</text>
<text x="834.5" y="424.8" font-size="10.5" text-anchor="middle">21</text>
<text x="855.5" y="424.8" font-size="10.5" text-anchor="middle">22</text>
<text x="875.5" y="424.8" font-size="10.5" text-anchor="middle">23</text>
</g>
<rect x="887" y="214" width="48" height="21" fill="#ffffff"/>
<text x="895.5" y="228.1" font-size="10.8" fill="#3a3c4e">1.2815</text>
</svg>
<svg width="1152" height="40" viewBox="0 0 1152 40" style="position:absolute;left:0;top:0">
<g font-family="'Liberation Sans', sans-serif" font-size="12" fill="#4e525a">
<text x="26.6" y="21" textLength="40.6" lengthAdjust="spacingAndGlyphs">График</text>
<text x="70" y="21" textLength="22.6" lengthAdjust="spacingAndGlyphs">GBP</text>
<text x="95" y="21" textLength="26.4" lengthAdjust="spacingAndGlyphs">/USD</text>
<text x="127.4" y="21">4</text>
<text x="137.4" y="21" textLength="31.4" lengthAdjust="spacingAndGlyphs">ЧАСА</text>
</g>
<g fill="none" stroke="#5a6a7c" stroke-width="1">
<path d="M7.5 8.5V22.5H21.5"/><path d="M7.5 7.6L9.2 10H5.8ZM22.6 22.5L20.2 20.8V24.2Z" fill="#5a6a7c" stroke="none"/>
</g>
<g stroke-width="1">
<path d="M11.5 13V21" stroke="#4f7f5a"/><rect x="10.5" y="15" width="2" height="4" fill="#6fa878" stroke="#4f7f5a"/>
<path d="M15.5 8V18" stroke="#4f7f5a"/><rect x="14.5" y="10.5" width="2" height="6" fill="#6fa878" stroke="#4f7f5a"/>
<path d="M19.5 11V20" stroke="#7a5560"/><rect x="18.5" y="13" width="2" height="5" fill="#a87884" stroke="#7a5560"/>
</g>
<g fill="#f4f6f8" stroke="#4a4e58" stroke-width="1">
<rect x="854.5" y="16.8" width="10" height="3.6" rx="1"/>
<rect x="887.5" y="12.5" width="10" height="8" rx="1"/><rect x="890.5" y="15" width="4" height="2.6" fill="#c8d2e0"/>
<path d="M920 12.5h3.8l1.8 2.1l1.8-2.1h3.8l-3.7 4.1l3.7 4.1h-3.8l-1.8-2.1l-1.8 2.1h-3.8l3.7-4.1z"/>
</g>
</svg>
</body></html>
